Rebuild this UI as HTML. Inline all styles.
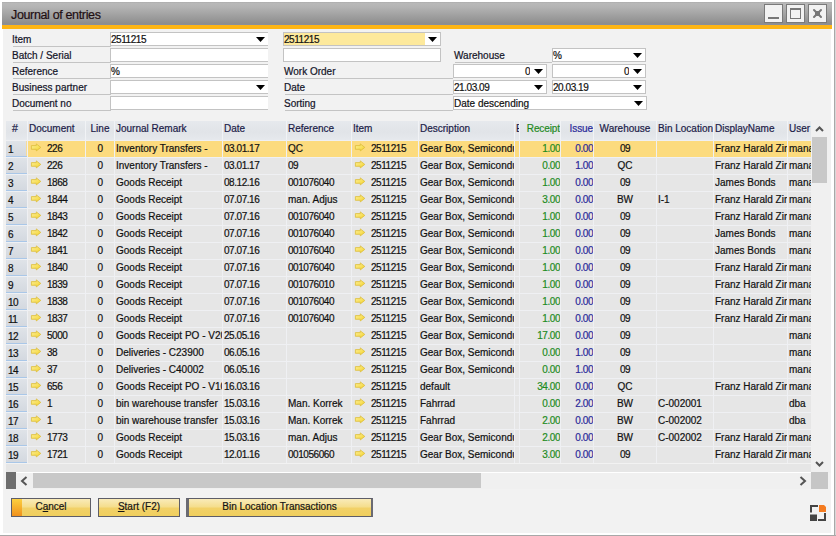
<!DOCTYPE html><html><head><meta charset="utf-8"><style>
html,body{margin:0;padding:0;width:836px;height:536px;overflow:hidden;background:#fff;font-family:"Liberation Sans", sans-serif;}
div{box-sizing:border-box;-webkit-text-stroke:0.2px currentColor;}
</style></head><body>
<svg width="0" height="0" style="position:absolute"><defs><linearGradient id="ag" x1="0" y1="0" x2="1" y2="1"><stop offset="0" stop-color="#fcef9a"/><stop offset="0.6" stop-color="#f8df58"/><stop offset="1" stop-color="#f2cf2c"/></linearGradient></defs></svg>
<div style="position:absolute;left:834px;top:0px;width:1px;height:536px;background:#a8a8a8;"></div>
<div style="position:absolute;left:835px;top:0px;width:1px;height:536px;background:#d8d8d8;"></div>
<div style="position:absolute;left:0px;top:535px;width:836px;height:1px;background:#a8a8a8;"></div>
<div style="position:absolute;left:2px;top:2px;width:830px;height:23px;background:linear-gradient(#a8a8a8 0,#b9b9b9 1px,#b4b4b4 5px,#8a8a8a 100%);"></div>
<div style="position:absolute;left:2px;top:24px;width:830px;height:1px;background:#8a8f9a;"></div>
<div style="position:absolute;left:2px;top:25px;width:830px;height:4px;background:#fdb515;"></div>
<div style="position:absolute;left:11px;top:8px;font-size:12.5px;line-height:14px;color:#1e0e12;white-space:nowrap;letter-spacing:-0.35px;">Journal of entries</div>
<div style="position:absolute;left:764px;top:4px;width:19px;height:19px;background:#f2f2f2;border:1px solid #7a7a7a;"></div>
<div style="position:absolute;left:786px;top:4px;width:19px;height:19px;background:#f2f2f2;border:1px solid #7a7a7a;"></div>
<div style="position:absolute;left:808px;top:4px;width:19px;height:19px;background:#f2f2f2;border:1px solid #7a7a7a;"></div>
<div style="position:absolute;left:768px;top:17px;width:11px;height:2px;background:#777;"></div>
<div style="position:absolute;left:790px;top:8px;width:11px;height:11px;background:transparent;border:1px solid #777;border-top-width:2px;"></div>
<svg width="19" height="19" style="position:absolute;left:808px;top:4px"><path d="M6,6 L13,13 M13,6 L6,13" stroke="#777" stroke-width="2" stroke-linecap="round"/><rect x="7" y="7" width="5" height="5" fill="#777"/></svg>
<div style="position:absolute;left:3px;top:29px;width:828px;height:504px;background:#f2f2f2;"></div>
<div style="position:absolute;left:12px;top:33px;font-size:10px;line-height:14px;color:#141428;white-space:nowrap;letter-spacing:0px;">Item</div>
<div style="position:absolute;left:13px;top:46px;width:98px;height:1px;background:#c4c4c4;"></div>
<div style="position:absolute;left:12px;top:49px;font-size:10px;line-height:14px;color:#141428;white-space:nowrap;letter-spacing:0px;">Batch / Serial</div>
<div style="position:absolute;left:13px;top:62px;width:98px;height:1px;background:#c4c4c4;"></div>
<div style="position:absolute;left:12px;top:65px;font-size:10px;line-height:14px;color:#141428;white-space:nowrap;letter-spacing:0px;">Reference</div>
<div style="position:absolute;left:13px;top:78px;width:98px;height:1px;background:#c4c4c4;"></div>
<div style="position:absolute;left:12px;top:81px;font-size:10px;line-height:14px;color:#141428;white-space:nowrap;letter-spacing:0px;">Business partner</div>
<div style="position:absolute;left:13px;top:94px;width:98px;height:1px;background:#c4c4c4;"></div>
<div style="position:absolute;left:12px;top:97px;font-size:10px;line-height:14px;color:#141428;white-space:nowrap;letter-spacing:0px;">Document no</div>
<div style="position:absolute;left:13px;top:110px;width:98px;height:1px;background:#c4c4c4;"></div>
<div style="position:absolute;left:110px;top:32px;width:158px;height:14px;background:#fff;border:1px solid #c3c3c3;border-right:none;"></div>
<div style="position:absolute;left:111px;top:33px;font-size:10px;line-height:14px;color:#111;white-space:nowrap;letter-spacing:-0.45px;">2511215</div>
<svg width="9" height="5" viewBox="0 0 9 5" style="position:absolute;left:256px;top:37px"><path d="M0,0 L9,0 L4.5,5 Z" fill="#000"/></svg>
<div style="position:absolute;left:110px;top:48px;width:158px;height:14px;background:#fff;border:1px solid #c3c3c3;border-right:none;"></div>
<div style="position:absolute;left:110px;top:64px;width:158px;height:14px;background:#fff;border:1px solid #c3c3c3;border-right:none;"></div>
<div style="position:absolute;left:111px;top:65px;font-size:10px;line-height:14px;color:#111;white-space:nowrap;letter-spacing:-0.45px;">%</div>
<div style="position:absolute;left:110px;top:80px;width:158px;height:14px;background:#fff;border:1px solid #c3c3c3;border-right:none;"></div>
<svg width="9" height="5" viewBox="0 0 9 5" style="position:absolute;left:256px;top:85px"><path d="M0,0 L9,0 L4.5,5 Z" fill="#000"/></svg>
<div style="position:absolute;left:110px;top:96px;width:158px;height:14px;background:#fff;border:1px solid #c3c3c3;border-right:none;"></div>
<div style="position:absolute;left:283px;top:32px;width:158px;height:14px;background:linear-gradient(90deg,#fde99c 0,#fde99c 141px,#fff 141px);border:1px solid #c3c3c3;"></div>
<div style="position:absolute;left:284px;top:33px;font-size:10px;line-height:14px;color:#111;white-space:nowrap;letter-spacing:-0.45px;">2511215</div>
<svg width="9" height="5" viewBox="0 0 9 5" style="position:absolute;left:428px;top:37px"><path d="M0,0 L9,0 L4.5,5 Z" fill="#000"/></svg>
<div style="position:absolute;left:283px;top:48px;width:158px;height:14px;background:#fff;border:1px solid #c3c3c3;"></div>
<div style="position:absolute;left:284px;top:65px;font-size:10px;line-height:14px;color:#141428;white-space:nowrap;letter-spacing:0px;">Work Order</div>
<div style="position:absolute;left:285px;top:78px;width:168px;height:1px;background:#c4c4c4;"></div>
<div style="position:absolute;left:284px;top:81px;font-size:10px;line-height:14px;color:#141428;white-space:nowrap;letter-spacing:0px;">Date</div>
<div style="position:absolute;left:285px;top:94px;width:168px;height:1px;background:#c4c4c4;"></div>
<div style="position:absolute;left:284px;top:97px;font-size:10px;line-height:14px;color:#141428;white-space:nowrap;letter-spacing:0px;">Sorting</div>
<div style="position:absolute;left:285px;top:110px;width:168px;height:1px;background:#c4c4c4;"></div>
<div style="position:absolute;left:454px;top:49px;font-size:10px;line-height:14px;color:#141428;white-space:nowrap;letter-spacing:0px;">Warehouse</div>
<div style="position:absolute;left:455px;top:62px;width:97px;height:1px;background:#c4c4c4;"></div>
<div style="position:absolute;left:453px;top:64px;width:94px;height:14px;background:#fff;border:1px solid #c3c3c3;"></div>
<div style="position:absolute;left:453px;top:65px;font-size:10px;line-height:14px;color:#111;white-space:nowrap;letter-spacing:-0.45px;width:77px;overflow:hidden;text-align:right;">0</div>
<svg width="9" height="5" viewBox="0 0 9 5" style="position:absolute;left:534px;top:69px"><path d="M0,0 L9,0 L4.5,5 Z" fill="#000"/></svg>
<div style="position:absolute;left:453px;top:80px;width:94px;height:14px;background:#fff;border:1px solid #c3c3c3;"></div>
<div style="position:absolute;left:454px;top:81px;font-size:10px;line-height:14px;color:#111;white-space:nowrap;letter-spacing:-0.45px;">21.03.09</div>
<svg width="9" height="5" viewBox="0 0 9 5" style="position:absolute;left:534px;top:85px"><path d="M0,0 L9,0 L4.5,5 Z" fill="#000"/></svg>
<div style="position:absolute;left:453px;top:96px;width:194px;height:14px;background:#fff;border:1px solid #c3c3c3;"></div>
<div style="position:absolute;left:454px;top:97px;font-size:10px;line-height:14px;color:#111;white-space:nowrap;letter-spacing:0px;">Date descending</div>
<svg width="9" height="5" viewBox="0 0 9 5" style="position:absolute;left:634px;top:101px"><path d="M0,0 L9,0 L4.5,5 Z" fill="#000"/></svg>
<div style="position:absolute;left:552px;top:48px;width:94px;height:14px;background:#fff;border:1px solid #c3c3c3;"></div>
<div style="position:absolute;left:553px;top:49px;font-size:10px;line-height:14px;color:#111;white-space:nowrap;letter-spacing:-0.45px;">%</div>
<svg width="9" height="5" viewBox="0 0 9 5" style="position:absolute;left:633px;top:53px"><path d="M0,0 L9,0 L4.5,5 Z" fill="#000"/></svg>
<div style="position:absolute;left:552px;top:64px;width:94px;height:14px;background:#fff;border:1px solid #c3c3c3;"></div>
<div style="position:absolute;left:552px;top:65px;font-size:10px;line-height:14px;color:#111;white-space:nowrap;letter-spacing:-0.45px;width:77px;overflow:hidden;text-align:right;">0</div>
<svg width="9" height="5" viewBox="0 0 9 5" style="position:absolute;left:633px;top:69px"><path d="M0,0 L9,0 L4.5,5 Z" fill="#000"/></svg>
<div style="position:absolute;left:552px;top:80px;width:94px;height:14px;background:#fff;border:1px solid #c3c3c3;"></div>
<div style="position:absolute;left:553px;top:81px;font-size:10px;line-height:14px;color:#111;white-space:nowrap;letter-spacing:-0.45px;">20.03.19</div>
<svg width="9" height="5" viewBox="0 0 9 5" style="position:absolute;left:633px;top:85px"><path d="M0,0 L9,0 L4.5,5 Z" fill="#000"/></svg>
<div style="position:absolute;left:6px;top:121px;width:805px;height:19px;background:linear-gradient(#e6e9ed,#e1e4e8 60%,#e6e9ed);"></div>
<div style="position:absolute;left:6px;top:140px;width:805px;height:323px;background:#eff0f3;"></div>
<div style="position:absolute;left:12px;top:121px;font-size:10.5px;line-height:14px;color:#1c1c48;white-space:nowrap;letter-spacing:0.3px;">#</div>
<div style="position:absolute;left:29px;top:122px;font-size:10px;line-height:14px;color:#1c1c48;white-space:nowrap;letter-spacing:0px;width:56px;overflow:hidden;text-align:left;">Document</div>
<div style="position:absolute;left:86px;top:122px;font-size:10px;line-height:14px;color:#1c1c48;white-space:nowrap;letter-spacing:0px;width:28px;overflow:hidden;text-align:center;">Line</div>
<div style="position:absolute;left:116px;top:122px;font-size:10px;line-height:14px;color:#1c1c48;white-space:nowrap;letter-spacing:0px;width:106px;overflow:hidden;text-align:left;">Journal Remark</div>
<div style="position:absolute;left:224px;top:122px;font-size:10px;line-height:14px;color:#1c1c48;white-space:nowrap;letter-spacing:0px;width:62px;overflow:hidden;text-align:left;">Date</div>
<div style="position:absolute;left:288px;top:122px;font-size:10px;line-height:14px;color:#1c1c48;white-space:nowrap;letter-spacing:0px;width:63px;overflow:hidden;text-align:left;">Reference</div>
<div style="position:absolute;left:353px;top:122px;font-size:10px;line-height:14px;color:#1c1c48;white-space:nowrap;letter-spacing:0px;width:65px;overflow:hidden;text-align:left;">Item</div>
<div style="position:absolute;left:420px;top:122px;font-size:10px;line-height:14px;color:#1c1c48;white-space:nowrap;letter-spacing:0px;width:94px;overflow:hidden;text-align:left;">Description</div>
<div style="position:absolute;left:516px;top:122px;font-size:10px;line-height:14px;color:#1c1c48;white-space:nowrap;letter-spacing:0px;width:3px;overflow:hidden;text-align:left;">E</div>
<div style="position:absolute;left:500px;top:122px;width:60px;text-align:right;font-size:10px;line-height:14px;color:#1f8a1f;white-space:nowrap;letter-spacing:-0.1px">Receipt</div>
<div style="position:absolute;left:541px;top:122px;width:52px;text-align:right;font-size:10px;line-height:14px;color:#2a2a9a;white-space:nowrap;letter-spacing:-0.1px">Issue</div>
<div style="position:absolute;left:594px;top:122px;font-size:10px;line-height:14px;color:#1c1c48;white-space:nowrap;letter-spacing:0px;width:62px;overflow:hidden;text-align:center;">Warehouse</div>
<div style="position:absolute;left:658px;top:122px;font-size:10px;line-height:14px;color:#1c1c48;white-space:nowrap;letter-spacing:0px;width:55px;overflow:hidden;text-align:left;">Bin Location</div>
<div style="position:absolute;left:715px;top:122px;font-size:10px;line-height:14px;color:#1c1c48;white-space:nowrap;letter-spacing:0px;width:72px;overflow:hidden;text-align:left;">DisplayName</div>
<div style="position:absolute;left:789px;top:122px;font-size:10px;line-height:14px;color:#1c1c48;white-space:nowrap;letter-spacing:0px;width:22px;overflow:hidden;text-align:left;">User</div>
<div style="position:absolute;left:27px;top:121px;width:1px;height:19px;background:#f1f3f6;"></div>
<div style="position:absolute;left:85px;top:121px;width:1px;height:19px;background:#f1f3f6;"></div>
<div style="position:absolute;left:114px;top:121px;width:1px;height:19px;background:#f1f3f6;"></div>
<div style="position:absolute;left:222px;top:121px;width:1px;height:19px;background:#f1f3f6;"></div>
<div style="position:absolute;left:286px;top:121px;width:1px;height:19px;background:#f1f3f6;"></div>
<div style="position:absolute;left:351px;top:121px;width:1px;height:19px;background:#f1f3f6;"></div>
<div style="position:absolute;left:418px;top:121px;width:1px;height:19px;background:#f1f3f6;"></div>
<div style="position:absolute;left:514px;top:121px;width:1px;height:19px;background:#f1f3f6;"></div>
<div style="position:absolute;left:519px;top:121px;width:1px;height:19px;background:#f1f3f6;"></div>
<div style="position:absolute;left:560px;top:121px;width:1px;height:19px;background:#f1f3f6;"></div>
<div style="position:absolute;left:593px;top:121px;width:1px;height:19px;background:#f1f3f6;"></div>
<div style="position:absolute;left:656px;top:121px;width:1px;height:19px;background:#f1f3f6;"></div>
<div style="position:absolute;left:713px;top:121px;width:1px;height:19px;background:#f1f3f6;"></div>
<div style="position:absolute;left:787px;top:121px;width:1px;height:19px;background:#f1f3f6;"></div>
<div style="position:absolute;left:6px;top:141px;width:21px;height:16px;background:linear-gradient(#dfe3e8,#d3d8df);"></div>
<div style="position:absolute;left:6px;top:156px;width:21px;height:1px;background:#a9c7e8;"></div>
<div style="position:absolute;left:8px;top:143px;font-size:10px;line-height:14px;color:#111;white-space:nowrap;letter-spacing:-0.45px;">1</div>
<div style="position:absolute;left:26px;top:141px;width:1px;height:15px;background:#f5dc9a;"></div>
<div style="position:absolute;left:28px;top:141px;width:57px;height:16px;background:#fcdb7e;"></div>
<div style="position:absolute;left:86px;top:141px;width:28px;height:16px;background:#fcdb7e;"></div>
<div style="position:absolute;left:115px;top:141px;width:107px;height:16px;background:#fcdb7e;"></div>
<div style="position:absolute;left:223px;top:141px;width:63px;height:16px;background:#fcdb7e;"></div>
<div style="position:absolute;left:287px;top:141px;width:64px;height:16px;background:#fcdb7e;"></div>
<div style="position:absolute;left:352px;top:141px;width:66px;height:16px;background:#fcdb7e;"></div>
<div style="position:absolute;left:419px;top:141px;width:95px;height:16px;background:#fcdb7e;"></div>
<div style="position:absolute;left:515px;top:141px;width:4px;height:16px;background:#fcdb7e;"></div>
<div style="position:absolute;left:520px;top:141px;width:40px;height:16px;background:#fcdb7e;"></div>
<div style="position:absolute;left:561px;top:141px;width:32px;height:16px;background:#fcdb7e;"></div>
<div style="position:absolute;left:594px;top:141px;width:62px;height:16px;background:#fcdb7e;"></div>
<div style="position:absolute;left:657px;top:141px;width:56px;height:16px;background:#fcdb7e;"></div>
<div style="position:absolute;left:714px;top:141px;width:73px;height:16px;background:#fcdb7e;"></div>
<div style="position:absolute;left:788px;top:141px;width:23px;height:16px;background:#fcdb7e;"></div>
<svg width="12" height="10" viewBox="0 0 12 10" style="position:absolute;left:30px;top:143px"><path d="M1.4,2.6 L6.3,2.6 L6.3,0.9 L10.8,4.4 L6.3,7.9 L6.3,6.3 L1.4,6.3 Z" fill="url(#ag)" stroke="#dcbd38" stroke-width="0.8" stroke-linejoin="round"/></svg>
<div style="position:absolute;left:47px;top:142px;font-size:10px;line-height:14px;color:#111;white-space:nowrap;letter-spacing:-0.45px;">226</div>
<div style="position:absolute;left:86px;top:142px;font-size:10px;line-height:14px;color:#111;white-space:nowrap;letter-spacing:-0.45px;width:28px;overflow:hidden;text-align:center;">0</div>
<div style="position:absolute;left:116px;top:142px;font-size:10px;line-height:14px;color:#111;white-space:nowrap;letter-spacing:0px;width:106px;overflow:hidden;text-align:left;">Inventory Transfers -</div>
<div style="position:absolute;left:224px;top:142px;font-size:10px;line-height:14px;color:#111;white-space:nowrap;letter-spacing:-0.45px;width:62px;overflow:hidden;text-align:left;">03.01.17</div>
<div style="position:absolute;left:288px;top:142px;font-size:10px;line-height:14px;color:#111;white-space:nowrap;letter-spacing:0px;width:63px;overflow:hidden;text-align:left;">QC</div>
<svg width="12" height="10" viewBox="0 0 12 10" style="position:absolute;left:354px;top:143px"><path d="M1.4,2.6 L6.3,2.6 L6.3,0.9 L10.8,4.4 L6.3,7.9 L6.3,6.3 L1.4,6.3 Z" fill="url(#ag)" stroke="#dcbd38" stroke-width="0.8" stroke-linejoin="round"/></svg>
<div style="position:absolute;left:371px;top:142px;font-size:10px;line-height:14px;color:#111;white-space:nowrap;letter-spacing:-0.45px;width:47px;overflow:hidden;text-align:left;">2511215</div>
<div style="position:absolute;left:420px;top:142px;font-size:10px;line-height:14px;color:#111;white-space:nowrap;letter-spacing:0px;width:94px;overflow:hidden;text-align:left;">Gear Box, Semiconductor</div>
<div style="position:absolute;left:520px;top:142px;font-size:10px;line-height:14px;color:#1e8c1e;white-space:nowrap;letter-spacing:-0.45px;width:40px;overflow:hidden;text-align:right;">1.00</div>
<div style="position:absolute;left:561px;top:142px;font-size:10px;line-height:14px;color:#2a2a9a;white-space:nowrap;letter-spacing:-0.45px;width:32px;overflow:hidden;text-align:right;">0.00</div>
<div style="position:absolute;left:594px;top:142px;font-size:10px;line-height:14px;color:#111;white-space:nowrap;letter-spacing:-0.45px;width:62px;overflow:hidden;text-align:center;">09</div>
<div style="position:absolute;left:658px;top:142px;font-size:10px;line-height:14px;color:#111;white-space:nowrap;letter-spacing:0px;width:55px;overflow:hidden;text-align:left;"></div>
<div style="position:absolute;left:715px;top:142px;font-size:10px;line-height:14px;color:#111;white-space:nowrap;letter-spacing:0px;width:72px;overflow:hidden;text-align:left;">Franz Harald Zimmermann</div>
<div style="position:absolute;left:789px;top:142px;font-size:10px;line-height:14px;color:#111;white-space:nowrap;letter-spacing:0px;width:23px;overflow:hidden;text-align:left;">manager</div>
<div style="position:absolute;left:6px;top:158px;width:21px;height:16px;background:linear-gradient(#dfe3e8,#d3d8df);"></div>
<div style="position:absolute;left:6px;top:173px;width:21px;height:1px;background:#a9c7e8;"></div>
<div style="position:absolute;left:8px;top:160px;font-size:10px;line-height:14px;color:#111;white-space:nowrap;letter-spacing:-0.45px;">2</div>
<div style="position:absolute;left:28px;top:158px;width:57px;height:16px;background:#e6e6e6;"></div>
<div style="position:absolute;left:86px;top:158px;width:28px;height:16px;background:#e6e6e6;"></div>
<div style="position:absolute;left:115px;top:158px;width:107px;height:16px;background:#e6e6e6;"></div>
<div style="position:absolute;left:223px;top:158px;width:63px;height:16px;background:#e6e6e6;"></div>
<div style="position:absolute;left:287px;top:158px;width:64px;height:16px;background:#e6e6e6;"></div>
<div style="position:absolute;left:352px;top:158px;width:66px;height:16px;background:#e6e6e6;"></div>
<div style="position:absolute;left:419px;top:158px;width:95px;height:16px;background:#e6e6e6;"></div>
<div style="position:absolute;left:515px;top:158px;width:4px;height:16px;background:#e6e6e6;"></div>
<div style="position:absolute;left:520px;top:158px;width:40px;height:16px;background:#e6e6e6;"></div>
<div style="position:absolute;left:561px;top:158px;width:32px;height:16px;background:#e6e6e6;"></div>
<div style="position:absolute;left:594px;top:158px;width:62px;height:16px;background:#e6e6e6;"></div>
<div style="position:absolute;left:657px;top:158px;width:56px;height:16px;background:#e6e6e6;"></div>
<div style="position:absolute;left:714px;top:158px;width:73px;height:16px;background:#e6e6e6;"></div>
<div style="position:absolute;left:788px;top:158px;width:23px;height:16px;background:#e6e6e6;"></div>
<svg width="12" height="10" viewBox="0 0 12 10" style="position:absolute;left:30px;top:160px"><path d="M1.4,2.6 L6.3,2.6 L6.3,0.9 L10.8,4.4 L6.3,7.9 L6.3,6.3 L1.4,6.3 Z" fill="url(#ag)" stroke="#dcbd38" stroke-width="0.8" stroke-linejoin="round"/></svg>
<div style="position:absolute;left:47px;top:159px;font-size:10px;line-height:14px;color:#111;white-space:nowrap;letter-spacing:-0.45px;">226</div>
<div style="position:absolute;left:86px;top:159px;font-size:10px;line-height:14px;color:#111;white-space:nowrap;letter-spacing:-0.45px;width:28px;overflow:hidden;text-align:center;">0</div>
<div style="position:absolute;left:116px;top:159px;font-size:10px;line-height:14px;color:#111;white-space:nowrap;letter-spacing:0px;width:106px;overflow:hidden;text-align:left;">Inventory Transfers -</div>
<div style="position:absolute;left:224px;top:159px;font-size:10px;line-height:14px;color:#111;white-space:nowrap;letter-spacing:-0.45px;width:62px;overflow:hidden;text-align:left;">03.01.17</div>
<div style="position:absolute;left:288px;top:159px;font-size:10px;line-height:14px;color:#111;white-space:nowrap;letter-spacing:-0.45px;width:63px;overflow:hidden;text-align:left;">09</div>
<svg width="12" height="10" viewBox="0 0 12 10" style="position:absolute;left:354px;top:160px"><path d="M1.4,2.6 L6.3,2.6 L6.3,0.9 L10.8,4.4 L6.3,7.9 L6.3,6.3 L1.4,6.3 Z" fill="url(#ag)" stroke="#dcbd38" stroke-width="0.8" stroke-linejoin="round"/></svg>
<div style="position:absolute;left:371px;top:159px;font-size:10px;line-height:14px;color:#111;white-space:nowrap;letter-spacing:-0.45px;width:47px;overflow:hidden;text-align:left;">2511215</div>
<div style="position:absolute;left:420px;top:159px;font-size:10px;line-height:14px;color:#111;white-space:nowrap;letter-spacing:0px;width:94px;overflow:hidden;text-align:left;">Gear Box, Semiconductor</div>
<div style="position:absolute;left:520px;top:159px;font-size:10px;line-height:14px;color:#1e8c1e;white-space:nowrap;letter-spacing:-0.45px;width:40px;overflow:hidden;text-align:right;">0.00</div>
<div style="position:absolute;left:561px;top:159px;font-size:10px;line-height:14px;color:#2a2a9a;white-space:nowrap;letter-spacing:-0.45px;width:32px;overflow:hidden;text-align:right;">1.00</div>
<div style="position:absolute;left:594px;top:159px;font-size:10px;line-height:14px;color:#111;white-space:nowrap;letter-spacing:0px;width:62px;overflow:hidden;text-align:center;">QC</div>
<div style="position:absolute;left:658px;top:159px;font-size:10px;line-height:14px;color:#111;white-space:nowrap;letter-spacing:0px;width:55px;overflow:hidden;text-align:left;"></div>
<div style="position:absolute;left:715px;top:159px;font-size:10px;line-height:14px;color:#111;white-space:nowrap;letter-spacing:0px;width:72px;overflow:hidden;text-align:left;">Franz Harald Zimmermann</div>
<div style="position:absolute;left:789px;top:159px;font-size:10px;line-height:14px;color:#111;white-space:nowrap;letter-spacing:0px;width:23px;overflow:hidden;text-align:left;">manager</div>
<div style="position:absolute;left:6px;top:175px;width:21px;height:16px;background:linear-gradient(#dfe3e8,#d3d8df);"></div>
<div style="position:absolute;left:6px;top:190px;width:21px;height:1px;background:#a9c7e8;"></div>
<div style="position:absolute;left:8px;top:177px;font-size:10px;line-height:14px;color:#111;white-space:nowrap;letter-spacing:-0.45px;">3</div>
<div style="position:absolute;left:28px;top:175px;width:57px;height:16px;background:#e6e6e6;"></div>
<div style="position:absolute;left:86px;top:175px;width:28px;height:16px;background:#e6e6e6;"></div>
<div style="position:absolute;left:115px;top:175px;width:107px;height:16px;background:#e6e6e6;"></div>
<div style="position:absolute;left:223px;top:175px;width:63px;height:16px;background:#e6e6e6;"></div>
<div style="position:absolute;left:287px;top:175px;width:64px;height:16px;background:#e6e6e6;"></div>
<div style="position:absolute;left:352px;top:175px;width:66px;height:16px;background:#e6e6e6;"></div>
<div style="position:absolute;left:419px;top:175px;width:95px;height:16px;background:#e6e6e6;"></div>
<div style="position:absolute;left:515px;top:175px;width:4px;height:16px;background:#e6e6e6;"></div>
<div style="position:absolute;left:520px;top:175px;width:40px;height:16px;background:#e6e6e6;"></div>
<div style="position:absolute;left:561px;top:175px;width:32px;height:16px;background:#e6e6e6;"></div>
<div style="position:absolute;left:594px;top:175px;width:62px;height:16px;background:#e6e6e6;"></div>
<div style="position:absolute;left:657px;top:175px;width:56px;height:16px;background:#e6e6e6;"></div>
<div style="position:absolute;left:714px;top:175px;width:73px;height:16px;background:#e6e6e6;"></div>
<div style="position:absolute;left:788px;top:175px;width:23px;height:16px;background:#e6e6e6;"></div>
<svg width="12" height="10" viewBox="0 0 12 10" style="position:absolute;left:30px;top:177px"><path d="M1.4,2.6 L6.3,2.6 L6.3,0.9 L10.8,4.4 L6.3,7.9 L6.3,6.3 L1.4,6.3 Z" fill="url(#ag)" stroke="#dcbd38" stroke-width="0.8" stroke-linejoin="round"/></svg>
<div style="position:absolute;left:47px;top:176px;font-size:10px;line-height:14px;color:#111;white-space:nowrap;letter-spacing:-0.45px;">1868</div>
<div style="position:absolute;left:86px;top:176px;font-size:10px;line-height:14px;color:#111;white-space:nowrap;letter-spacing:-0.45px;width:28px;overflow:hidden;text-align:center;">0</div>
<div style="position:absolute;left:116px;top:176px;font-size:10px;line-height:14px;color:#111;white-space:nowrap;letter-spacing:0px;width:106px;overflow:hidden;text-align:left;">Goods Receipt</div>
<div style="position:absolute;left:224px;top:176px;font-size:10px;line-height:14px;color:#111;white-space:nowrap;letter-spacing:-0.45px;width:62px;overflow:hidden;text-align:left;">08.12.16</div>
<div style="position:absolute;left:288px;top:176px;font-size:10px;line-height:14px;color:#111;white-space:nowrap;letter-spacing:-0.45px;width:63px;overflow:hidden;text-align:left;">001076040</div>
<svg width="12" height="10" viewBox="0 0 12 10" style="position:absolute;left:354px;top:177px"><path d="M1.4,2.6 L6.3,2.6 L6.3,0.9 L10.8,4.4 L6.3,7.9 L6.3,6.3 L1.4,6.3 Z" fill="url(#ag)" stroke="#dcbd38" stroke-width="0.8" stroke-linejoin="round"/></svg>
<div style="position:absolute;left:371px;top:176px;font-size:10px;line-height:14px;color:#111;white-space:nowrap;letter-spacing:-0.45px;width:47px;overflow:hidden;text-align:left;">2511215</div>
<div style="position:absolute;left:420px;top:176px;font-size:10px;line-height:14px;color:#111;white-space:nowrap;letter-spacing:0px;width:94px;overflow:hidden;text-align:left;">Gear Box, Semiconductor</div>
<div style="position:absolute;left:520px;top:176px;font-size:10px;line-height:14px;color:#1e8c1e;white-space:nowrap;letter-spacing:-0.45px;width:40px;overflow:hidden;text-align:right;">1.00</div>
<div style="position:absolute;left:561px;top:176px;font-size:10px;line-height:14px;color:#2a2a9a;white-space:nowrap;letter-spacing:-0.45px;width:32px;overflow:hidden;text-align:right;">0.00</div>
<div style="position:absolute;left:594px;top:176px;font-size:10px;line-height:14px;color:#111;white-space:nowrap;letter-spacing:-0.45px;width:62px;overflow:hidden;text-align:center;">09</div>
<div style="position:absolute;left:658px;top:176px;font-size:10px;line-height:14px;color:#111;white-space:nowrap;letter-spacing:0px;width:55px;overflow:hidden;text-align:left;"></div>
<div style="position:absolute;left:715px;top:176px;font-size:10px;line-height:14px;color:#111;white-space:nowrap;letter-spacing:0px;width:72px;overflow:hidden;text-align:left;">James Bonds</div>
<div style="position:absolute;left:789px;top:176px;font-size:10px;line-height:14px;color:#111;white-space:nowrap;letter-spacing:0px;width:23px;overflow:hidden;text-align:left;">manager</div>
<div style="position:absolute;left:6px;top:192px;width:21px;height:16px;background:linear-gradient(#dfe3e8,#d3d8df);"></div>
<div style="position:absolute;left:6px;top:207px;width:21px;height:1px;background:#a9c7e8;"></div>
<div style="position:absolute;left:8px;top:194px;font-size:10px;line-height:14px;color:#111;white-space:nowrap;letter-spacing:-0.45px;">4</div>
<div style="position:absolute;left:28px;top:192px;width:57px;height:16px;background:#e6e6e6;"></div>
<div style="position:absolute;left:86px;top:192px;width:28px;height:16px;background:#e6e6e6;"></div>
<div style="position:absolute;left:115px;top:192px;width:107px;height:16px;background:#e6e6e6;"></div>
<div style="position:absolute;left:223px;top:192px;width:63px;height:16px;background:#e6e6e6;"></div>
<div style="position:absolute;left:287px;top:192px;width:64px;height:16px;background:#e6e6e6;"></div>
<div style="position:absolute;left:352px;top:192px;width:66px;height:16px;background:#e6e6e6;"></div>
<div style="position:absolute;left:419px;top:192px;width:95px;height:16px;background:#e6e6e6;"></div>
<div style="position:absolute;left:515px;top:192px;width:4px;height:16px;background:#e6e6e6;"></div>
<div style="position:absolute;left:520px;top:192px;width:40px;height:16px;background:#e6e6e6;"></div>
<div style="position:absolute;left:561px;top:192px;width:32px;height:16px;background:#e6e6e6;"></div>
<div style="position:absolute;left:594px;top:192px;width:62px;height:16px;background:#e6e6e6;"></div>
<div style="position:absolute;left:657px;top:192px;width:56px;height:16px;background:#e6e6e6;"></div>
<div style="position:absolute;left:714px;top:192px;width:73px;height:16px;background:#e6e6e6;"></div>
<div style="position:absolute;left:788px;top:192px;width:23px;height:16px;background:#e6e6e6;"></div>
<svg width="12" height="10" viewBox="0 0 12 10" style="position:absolute;left:30px;top:194px"><path d="M1.4,2.6 L6.3,2.6 L6.3,0.9 L10.8,4.4 L6.3,7.9 L6.3,6.3 L1.4,6.3 Z" fill="url(#ag)" stroke="#dcbd38" stroke-width="0.8" stroke-linejoin="round"/></svg>
<div style="position:absolute;left:47px;top:193px;font-size:10px;line-height:14px;color:#111;white-space:nowrap;letter-spacing:-0.45px;">1844</div>
<div style="position:absolute;left:86px;top:193px;font-size:10px;line-height:14px;color:#111;white-space:nowrap;letter-spacing:-0.45px;width:28px;overflow:hidden;text-align:center;">0</div>
<div style="position:absolute;left:116px;top:193px;font-size:10px;line-height:14px;color:#111;white-space:nowrap;letter-spacing:0px;width:106px;overflow:hidden;text-align:left;">Goods Receipt</div>
<div style="position:absolute;left:224px;top:193px;font-size:10px;line-height:14px;color:#111;white-space:nowrap;letter-spacing:-0.45px;width:62px;overflow:hidden;text-align:left;">07.07.16</div>
<div style="position:absolute;left:288px;top:193px;font-size:10px;line-height:14px;color:#111;white-space:nowrap;letter-spacing:0px;width:63px;overflow:hidden;text-align:left;">man. Adjus</div>
<svg width="12" height="10" viewBox="0 0 12 10" style="position:absolute;left:354px;top:194px"><path d="M1.4,2.6 L6.3,2.6 L6.3,0.9 L10.8,4.4 L6.3,7.9 L6.3,6.3 L1.4,6.3 Z" fill="url(#ag)" stroke="#dcbd38" stroke-width="0.8" stroke-linejoin="round"/></svg>
<div style="position:absolute;left:371px;top:193px;font-size:10px;line-height:14px;color:#111;white-space:nowrap;letter-spacing:-0.45px;width:47px;overflow:hidden;text-align:left;">2511215</div>
<div style="position:absolute;left:420px;top:193px;font-size:10px;line-height:14px;color:#111;white-space:nowrap;letter-spacing:0px;width:94px;overflow:hidden;text-align:left;">Gear Box, Semiconductor</div>
<div style="position:absolute;left:520px;top:193px;font-size:10px;line-height:14px;color:#1e8c1e;white-space:nowrap;letter-spacing:-0.45px;width:40px;overflow:hidden;text-align:right;">3.00</div>
<div style="position:absolute;left:561px;top:193px;font-size:10px;line-height:14px;color:#2a2a9a;white-space:nowrap;letter-spacing:-0.45px;width:32px;overflow:hidden;text-align:right;">0.00</div>
<div style="position:absolute;left:594px;top:193px;font-size:10px;line-height:14px;color:#111;white-space:nowrap;letter-spacing:0px;width:62px;overflow:hidden;text-align:center;">BW</div>
<div style="position:absolute;left:658px;top:193px;font-size:10px;line-height:14px;color:#111;white-space:nowrap;letter-spacing:0px;width:55px;overflow:hidden;text-align:left;">I-1</div>
<div style="position:absolute;left:715px;top:193px;font-size:10px;line-height:14px;color:#111;white-space:nowrap;letter-spacing:0px;width:72px;overflow:hidden;text-align:left;">Franz Harald Zimmermann</div>
<div style="position:absolute;left:789px;top:193px;font-size:10px;line-height:14px;color:#111;white-space:nowrap;letter-spacing:0px;width:23px;overflow:hidden;text-align:left;">manager</div>
<div style="position:absolute;left:6px;top:209px;width:21px;height:16px;background:linear-gradient(#dfe3e8,#d3d8df);"></div>
<div style="position:absolute;left:6px;top:224px;width:21px;height:1px;background:#a9c7e8;"></div>
<div style="position:absolute;left:8px;top:211px;font-size:10px;line-height:14px;color:#111;white-space:nowrap;letter-spacing:-0.45px;">5</div>
<div style="position:absolute;left:28px;top:209px;width:57px;height:16px;background:#e6e6e6;"></div>
<div style="position:absolute;left:86px;top:209px;width:28px;height:16px;background:#e6e6e6;"></div>
<div style="position:absolute;left:115px;top:209px;width:107px;height:16px;background:#e6e6e6;"></div>
<div style="position:absolute;left:223px;top:209px;width:63px;height:16px;background:#e6e6e6;"></div>
<div style="position:absolute;left:287px;top:209px;width:64px;height:16px;background:#e6e6e6;"></div>
<div style="position:absolute;left:352px;top:209px;width:66px;height:16px;background:#e6e6e6;"></div>
<div style="position:absolute;left:419px;top:209px;width:95px;height:16px;background:#e6e6e6;"></div>
<div style="position:absolute;left:515px;top:209px;width:4px;height:16px;background:#e6e6e6;"></div>
<div style="position:absolute;left:520px;top:209px;width:40px;height:16px;background:#e6e6e6;"></div>
<div style="position:absolute;left:561px;top:209px;width:32px;height:16px;background:#e6e6e6;"></div>
<div style="position:absolute;left:594px;top:209px;width:62px;height:16px;background:#e6e6e6;"></div>
<div style="position:absolute;left:657px;top:209px;width:56px;height:16px;background:#e6e6e6;"></div>
<div style="position:absolute;left:714px;top:209px;width:73px;height:16px;background:#e6e6e6;"></div>
<div style="position:absolute;left:788px;top:209px;width:23px;height:16px;background:#e6e6e6;"></div>
<svg width="12" height="10" viewBox="0 0 12 10" style="position:absolute;left:30px;top:211px"><path d="M1.4,2.6 L6.3,2.6 L6.3,0.9 L10.8,4.4 L6.3,7.9 L6.3,6.3 L1.4,6.3 Z" fill="url(#ag)" stroke="#dcbd38" stroke-width="0.8" stroke-linejoin="round"/></svg>
<div style="position:absolute;left:47px;top:210px;font-size:10px;line-height:14px;color:#111;white-space:nowrap;letter-spacing:-0.45px;">1843</div>
<div style="position:absolute;left:86px;top:210px;font-size:10px;line-height:14px;color:#111;white-space:nowrap;letter-spacing:-0.45px;width:28px;overflow:hidden;text-align:center;">0</div>
<div style="position:absolute;left:116px;top:210px;font-size:10px;line-height:14px;color:#111;white-space:nowrap;letter-spacing:0px;width:106px;overflow:hidden;text-align:left;">Goods Receipt</div>
<div style="position:absolute;left:224px;top:210px;font-size:10px;line-height:14px;color:#111;white-space:nowrap;letter-spacing:-0.45px;width:62px;overflow:hidden;text-align:left;">07.07.16</div>
<div style="position:absolute;left:288px;top:210px;font-size:10px;line-height:14px;color:#111;white-space:nowrap;letter-spacing:-0.45px;width:63px;overflow:hidden;text-align:left;">001076040</div>
<svg width="12" height="10" viewBox="0 0 12 10" style="position:absolute;left:354px;top:211px"><path d="M1.4,2.6 L6.3,2.6 L6.3,0.9 L10.8,4.4 L6.3,7.9 L6.3,6.3 L1.4,6.3 Z" fill="url(#ag)" stroke="#dcbd38" stroke-width="0.8" stroke-linejoin="round"/></svg>
<div style="position:absolute;left:371px;top:210px;font-size:10px;line-height:14px;color:#111;white-space:nowrap;letter-spacing:-0.45px;width:47px;overflow:hidden;text-align:left;">2511215</div>
<div style="position:absolute;left:420px;top:210px;font-size:10px;line-height:14px;color:#111;white-space:nowrap;letter-spacing:0px;width:94px;overflow:hidden;text-align:left;">Gear Box, Semiconductor</div>
<div style="position:absolute;left:520px;top:210px;font-size:10px;line-height:14px;color:#1e8c1e;white-space:nowrap;letter-spacing:-0.45px;width:40px;overflow:hidden;text-align:right;">1.00</div>
<div style="position:absolute;left:561px;top:210px;font-size:10px;line-height:14px;color:#2a2a9a;white-space:nowrap;letter-spacing:-0.45px;width:32px;overflow:hidden;text-align:right;">0.00</div>
<div style="position:absolute;left:594px;top:210px;font-size:10px;line-height:14px;color:#111;white-space:nowrap;letter-spacing:-0.45px;width:62px;overflow:hidden;text-align:center;">09</div>
<div style="position:absolute;left:658px;top:210px;font-size:10px;line-height:14px;color:#111;white-space:nowrap;letter-spacing:0px;width:55px;overflow:hidden;text-align:left;"></div>
<div style="position:absolute;left:715px;top:210px;font-size:10px;line-height:14px;color:#111;white-space:nowrap;letter-spacing:0px;width:72px;overflow:hidden;text-align:left;">Franz Harald Zimmermann</div>
<div style="position:absolute;left:789px;top:210px;font-size:10px;line-height:14px;color:#111;white-space:nowrap;letter-spacing:0px;width:23px;overflow:hidden;text-align:left;">manager</div>
<div style="position:absolute;left:6px;top:226px;width:21px;height:16px;background:linear-gradient(#dfe3e8,#d3d8df);"></div>
<div style="position:absolute;left:6px;top:241px;width:21px;height:1px;background:#a9c7e8;"></div>
<div style="position:absolute;left:8px;top:228px;font-size:10px;line-height:14px;color:#111;white-space:nowrap;letter-spacing:-0.45px;">6</div>
<div style="position:absolute;left:28px;top:226px;width:57px;height:16px;background:#e6e6e6;"></div>
<div style="position:absolute;left:86px;top:226px;width:28px;height:16px;background:#e6e6e6;"></div>
<div style="position:absolute;left:115px;top:226px;width:107px;height:16px;background:#e6e6e6;"></div>
<div style="position:absolute;left:223px;top:226px;width:63px;height:16px;background:#e6e6e6;"></div>
<div style="position:absolute;left:287px;top:226px;width:64px;height:16px;background:#e6e6e6;"></div>
<div style="position:absolute;left:352px;top:226px;width:66px;height:16px;background:#e6e6e6;"></div>
<div style="position:absolute;left:419px;top:226px;width:95px;height:16px;background:#e6e6e6;"></div>
<div style="position:absolute;left:515px;top:226px;width:4px;height:16px;background:#e6e6e6;"></div>
<div style="position:absolute;left:520px;top:226px;width:40px;height:16px;background:#e6e6e6;"></div>
<div style="position:absolute;left:561px;top:226px;width:32px;height:16px;background:#e6e6e6;"></div>
<div style="position:absolute;left:594px;top:226px;width:62px;height:16px;background:#e6e6e6;"></div>
<div style="position:absolute;left:657px;top:226px;width:56px;height:16px;background:#e6e6e6;"></div>
<div style="position:absolute;left:714px;top:226px;width:73px;height:16px;background:#e6e6e6;"></div>
<div style="position:absolute;left:788px;top:226px;width:23px;height:16px;background:#e6e6e6;"></div>
<svg width="12" height="10" viewBox="0 0 12 10" style="position:absolute;left:30px;top:228px"><path d="M1.4,2.6 L6.3,2.6 L6.3,0.9 L10.8,4.4 L6.3,7.9 L6.3,6.3 L1.4,6.3 Z" fill="url(#ag)" stroke="#dcbd38" stroke-width="0.8" stroke-linejoin="round"/></svg>
<div style="position:absolute;left:47px;top:227px;font-size:10px;line-height:14px;color:#111;white-space:nowrap;letter-spacing:-0.45px;">1842</div>
<div style="position:absolute;left:86px;top:227px;font-size:10px;line-height:14px;color:#111;white-space:nowrap;letter-spacing:-0.45px;width:28px;overflow:hidden;text-align:center;">0</div>
<div style="position:absolute;left:116px;top:227px;font-size:10px;line-height:14px;color:#111;white-space:nowrap;letter-spacing:0px;width:106px;overflow:hidden;text-align:left;">Goods Receipt</div>
<div style="position:absolute;left:224px;top:227px;font-size:10px;line-height:14px;color:#111;white-space:nowrap;letter-spacing:-0.45px;width:62px;overflow:hidden;text-align:left;">07.07.16</div>
<div style="position:absolute;left:288px;top:227px;font-size:10px;line-height:14px;color:#111;white-space:nowrap;letter-spacing:-0.45px;width:63px;overflow:hidden;text-align:left;">001076040</div>
<svg width="12" height="10" viewBox="0 0 12 10" style="position:absolute;left:354px;top:228px"><path d="M1.4,2.6 L6.3,2.6 L6.3,0.9 L10.8,4.4 L6.3,7.9 L6.3,6.3 L1.4,6.3 Z" fill="url(#ag)" stroke="#dcbd38" stroke-width="0.8" stroke-linejoin="round"/></svg>
<div style="position:absolute;left:371px;top:227px;font-size:10px;line-height:14px;color:#111;white-space:nowrap;letter-spacing:-0.45px;width:47px;overflow:hidden;text-align:left;">2511215</div>
<div style="position:absolute;left:420px;top:227px;font-size:10px;line-height:14px;color:#111;white-space:nowrap;letter-spacing:0px;width:94px;overflow:hidden;text-align:left;">Gear Box, Semiconductor</div>
<div style="position:absolute;left:520px;top:227px;font-size:10px;line-height:14px;color:#1e8c1e;white-space:nowrap;letter-spacing:-0.45px;width:40px;overflow:hidden;text-align:right;">1.00</div>
<div style="position:absolute;left:561px;top:227px;font-size:10px;line-height:14px;color:#2a2a9a;white-space:nowrap;letter-spacing:-0.45px;width:32px;overflow:hidden;text-align:right;">0.00</div>
<div style="position:absolute;left:594px;top:227px;font-size:10px;line-height:14px;color:#111;white-space:nowrap;letter-spacing:-0.45px;width:62px;overflow:hidden;text-align:center;">09</div>
<div style="position:absolute;left:658px;top:227px;font-size:10px;line-height:14px;color:#111;white-space:nowrap;letter-spacing:0px;width:55px;overflow:hidden;text-align:left;"></div>
<div style="position:absolute;left:715px;top:227px;font-size:10px;line-height:14px;color:#111;white-space:nowrap;letter-spacing:0px;width:72px;overflow:hidden;text-align:left;">James Bonds</div>
<div style="position:absolute;left:789px;top:227px;font-size:10px;line-height:14px;color:#111;white-space:nowrap;letter-spacing:0px;width:23px;overflow:hidden;text-align:left;">manager</div>
<div style="position:absolute;left:6px;top:243px;width:21px;height:16px;background:linear-gradient(#dfe3e8,#d3d8df);"></div>
<div style="position:absolute;left:6px;top:258px;width:21px;height:1px;background:#a9c7e8;"></div>
<div style="position:absolute;left:8px;top:245px;font-size:10px;line-height:14px;color:#111;white-space:nowrap;letter-spacing:-0.45px;">7</div>
<div style="position:absolute;left:28px;top:243px;width:57px;height:16px;background:#e6e6e6;"></div>
<div style="position:absolute;left:86px;top:243px;width:28px;height:16px;background:#e6e6e6;"></div>
<div style="position:absolute;left:115px;top:243px;width:107px;height:16px;background:#e6e6e6;"></div>
<div style="position:absolute;left:223px;top:243px;width:63px;height:16px;background:#e6e6e6;"></div>
<div style="position:absolute;left:287px;top:243px;width:64px;height:16px;background:#e6e6e6;"></div>
<div style="position:absolute;left:352px;top:243px;width:66px;height:16px;background:#e6e6e6;"></div>
<div style="position:absolute;left:419px;top:243px;width:95px;height:16px;background:#e6e6e6;"></div>
<div style="position:absolute;left:515px;top:243px;width:4px;height:16px;background:#e6e6e6;"></div>
<div style="position:absolute;left:520px;top:243px;width:40px;height:16px;background:#e6e6e6;"></div>
<div style="position:absolute;left:561px;top:243px;width:32px;height:16px;background:#e6e6e6;"></div>
<div style="position:absolute;left:594px;top:243px;width:62px;height:16px;background:#e6e6e6;"></div>
<div style="position:absolute;left:657px;top:243px;width:56px;height:16px;background:#e6e6e6;"></div>
<div style="position:absolute;left:714px;top:243px;width:73px;height:16px;background:#e6e6e6;"></div>
<div style="position:absolute;left:788px;top:243px;width:23px;height:16px;background:#e6e6e6;"></div>
<svg width="12" height="10" viewBox="0 0 12 10" style="position:absolute;left:30px;top:245px"><path d="M1.4,2.6 L6.3,2.6 L6.3,0.9 L10.8,4.4 L6.3,7.9 L6.3,6.3 L1.4,6.3 Z" fill="url(#ag)" stroke="#dcbd38" stroke-width="0.8" stroke-linejoin="round"/></svg>
<div style="position:absolute;left:47px;top:244px;font-size:10px;line-height:14px;color:#111;white-space:nowrap;letter-spacing:-0.45px;">1841</div>
<div style="position:absolute;left:86px;top:244px;font-size:10px;line-height:14px;color:#111;white-space:nowrap;letter-spacing:-0.45px;width:28px;overflow:hidden;text-align:center;">0</div>
<div style="position:absolute;left:116px;top:244px;font-size:10px;line-height:14px;color:#111;white-space:nowrap;letter-spacing:0px;width:106px;overflow:hidden;text-align:left;">Goods Receipt</div>
<div style="position:absolute;left:224px;top:244px;font-size:10px;line-height:14px;color:#111;white-space:nowrap;letter-spacing:-0.45px;width:62px;overflow:hidden;text-align:left;">07.07.16</div>
<div style="position:absolute;left:288px;top:244px;font-size:10px;line-height:14px;color:#111;white-space:nowrap;letter-spacing:-0.45px;width:63px;overflow:hidden;text-align:left;">001076040</div>
<svg width="12" height="10" viewBox="0 0 12 10" style="position:absolute;left:354px;top:245px"><path d="M1.4,2.6 L6.3,2.6 L6.3,0.9 L10.8,4.4 L6.3,7.9 L6.3,6.3 L1.4,6.3 Z" fill="url(#ag)" stroke="#dcbd38" stroke-width="0.8" stroke-linejoin="round"/></svg>
<div style="position:absolute;left:371px;top:244px;font-size:10px;line-height:14px;color:#111;white-space:nowrap;letter-spacing:-0.45px;width:47px;overflow:hidden;text-align:left;">2511215</div>
<div style="position:absolute;left:420px;top:244px;font-size:10px;line-height:14px;color:#111;white-space:nowrap;letter-spacing:0px;width:94px;overflow:hidden;text-align:left;">Gear Box, Semiconductor</div>
<div style="position:absolute;left:520px;top:244px;font-size:10px;line-height:14px;color:#1e8c1e;white-space:nowrap;letter-spacing:-0.45px;width:40px;overflow:hidden;text-align:right;">1.00</div>
<div style="position:absolute;left:561px;top:244px;font-size:10px;line-height:14px;color:#2a2a9a;white-space:nowrap;letter-spacing:-0.45px;width:32px;overflow:hidden;text-align:right;">0.00</div>
<div style="position:absolute;left:594px;top:244px;font-size:10px;line-height:14px;color:#111;white-space:nowrap;letter-spacing:-0.45px;width:62px;overflow:hidden;text-align:center;">09</div>
<div style="position:absolute;left:658px;top:244px;font-size:10px;line-height:14px;color:#111;white-space:nowrap;letter-spacing:0px;width:55px;overflow:hidden;text-align:left;"></div>
<div style="position:absolute;left:715px;top:244px;font-size:10px;line-height:14px;color:#111;white-space:nowrap;letter-spacing:0px;width:72px;overflow:hidden;text-align:left;">James Bonds</div>
<div style="position:absolute;left:789px;top:244px;font-size:10px;line-height:14px;color:#111;white-space:nowrap;letter-spacing:0px;width:23px;overflow:hidden;text-align:left;">manager</div>
<div style="position:absolute;left:6px;top:260px;width:21px;height:16px;background:linear-gradient(#dfe3e8,#d3d8df);"></div>
<div style="position:absolute;left:6px;top:275px;width:21px;height:1px;background:#a9c7e8;"></div>
<div style="position:absolute;left:8px;top:262px;font-size:10px;line-height:14px;color:#111;white-space:nowrap;letter-spacing:-0.45px;">8</div>
<div style="position:absolute;left:28px;top:260px;width:57px;height:16px;background:#e6e6e6;"></div>
<div style="position:absolute;left:86px;top:260px;width:28px;height:16px;background:#e6e6e6;"></div>
<div style="position:absolute;left:115px;top:260px;width:107px;height:16px;background:#e6e6e6;"></div>
<div style="position:absolute;left:223px;top:260px;width:63px;height:16px;background:#e6e6e6;"></div>
<div style="position:absolute;left:287px;top:260px;width:64px;height:16px;background:#e6e6e6;"></div>
<div style="position:absolute;left:352px;top:260px;width:66px;height:16px;background:#e6e6e6;"></div>
<div style="position:absolute;left:419px;top:260px;width:95px;height:16px;background:#e6e6e6;"></div>
<div style="position:absolute;left:515px;top:260px;width:4px;height:16px;background:#e6e6e6;"></div>
<div style="position:absolute;left:520px;top:260px;width:40px;height:16px;background:#e6e6e6;"></div>
<div style="position:absolute;left:561px;top:260px;width:32px;height:16px;background:#e6e6e6;"></div>
<div style="position:absolute;left:594px;top:260px;width:62px;height:16px;background:#e6e6e6;"></div>
<div style="position:absolute;left:657px;top:260px;width:56px;height:16px;background:#e6e6e6;"></div>
<div style="position:absolute;left:714px;top:260px;width:73px;height:16px;background:#e6e6e6;"></div>
<div style="position:absolute;left:788px;top:260px;width:23px;height:16px;background:#e6e6e6;"></div>
<svg width="12" height="10" viewBox="0 0 12 10" style="position:absolute;left:30px;top:262px"><path d="M1.4,2.6 L6.3,2.6 L6.3,0.9 L10.8,4.4 L6.3,7.9 L6.3,6.3 L1.4,6.3 Z" fill="url(#ag)" stroke="#dcbd38" stroke-width="0.8" stroke-linejoin="round"/></svg>
<div style="position:absolute;left:47px;top:261px;font-size:10px;line-height:14px;color:#111;white-space:nowrap;letter-spacing:-0.45px;">1840</div>
<div style="position:absolute;left:86px;top:261px;font-size:10px;line-height:14px;color:#111;white-space:nowrap;letter-spacing:-0.45px;width:28px;overflow:hidden;text-align:center;">0</div>
<div style="position:absolute;left:116px;top:261px;font-size:10px;line-height:14px;color:#111;white-space:nowrap;letter-spacing:0px;width:106px;overflow:hidden;text-align:left;">Goods Receipt</div>
<div style="position:absolute;left:224px;top:261px;font-size:10px;line-height:14px;color:#111;white-space:nowrap;letter-spacing:-0.45px;width:62px;overflow:hidden;text-align:left;">07.07.16</div>
<div style="position:absolute;left:288px;top:261px;font-size:10px;line-height:14px;color:#111;white-space:nowrap;letter-spacing:-0.45px;width:63px;overflow:hidden;text-align:left;">001076040</div>
<svg width="12" height="10" viewBox="0 0 12 10" style="position:absolute;left:354px;top:262px"><path d="M1.4,2.6 L6.3,2.6 L6.3,0.9 L10.8,4.4 L6.3,7.9 L6.3,6.3 L1.4,6.3 Z" fill="url(#ag)" stroke="#dcbd38" stroke-width="0.8" stroke-linejoin="round"/></svg>
<div style="position:absolute;left:371px;top:261px;font-size:10px;line-height:14px;color:#111;white-space:nowrap;letter-spacing:-0.45px;width:47px;overflow:hidden;text-align:left;">2511215</div>
<div style="position:absolute;left:420px;top:261px;font-size:10px;line-height:14px;color:#111;white-space:nowrap;letter-spacing:0px;width:94px;overflow:hidden;text-align:left;">Gear Box, Semiconductor</div>
<div style="position:absolute;left:520px;top:261px;font-size:10px;line-height:14px;color:#1e8c1e;white-space:nowrap;letter-spacing:-0.45px;width:40px;overflow:hidden;text-align:right;">1.00</div>
<div style="position:absolute;left:561px;top:261px;font-size:10px;line-height:14px;color:#2a2a9a;white-space:nowrap;letter-spacing:-0.45px;width:32px;overflow:hidden;text-align:right;">0.00</div>
<div style="position:absolute;left:594px;top:261px;font-size:10px;line-height:14px;color:#111;white-space:nowrap;letter-spacing:-0.45px;width:62px;overflow:hidden;text-align:center;">09</div>
<div style="position:absolute;left:658px;top:261px;font-size:10px;line-height:14px;color:#111;white-space:nowrap;letter-spacing:0px;width:55px;overflow:hidden;text-align:left;"></div>
<div style="position:absolute;left:715px;top:261px;font-size:10px;line-height:14px;color:#111;white-space:nowrap;letter-spacing:0px;width:72px;overflow:hidden;text-align:left;">Franz Harald Zimmermann</div>
<div style="position:absolute;left:789px;top:261px;font-size:10px;line-height:14px;color:#111;white-space:nowrap;letter-spacing:0px;width:23px;overflow:hidden;text-align:left;">manager</div>
<div style="position:absolute;left:6px;top:277px;width:21px;height:16px;background:linear-gradient(#dfe3e8,#d3d8df);"></div>
<div style="position:absolute;left:6px;top:292px;width:21px;height:1px;background:#a9c7e8;"></div>
<div style="position:absolute;left:8px;top:279px;font-size:10px;line-height:14px;color:#111;white-space:nowrap;letter-spacing:-0.45px;">9</div>
<div style="position:absolute;left:28px;top:277px;width:57px;height:16px;background:#e6e6e6;"></div>
<div style="position:absolute;left:86px;top:277px;width:28px;height:16px;background:#e6e6e6;"></div>
<div style="position:absolute;left:115px;top:277px;width:107px;height:16px;background:#e6e6e6;"></div>
<div style="position:absolute;left:223px;top:277px;width:63px;height:16px;background:#e6e6e6;"></div>
<div style="position:absolute;left:287px;top:277px;width:64px;height:16px;background:#e6e6e6;"></div>
<div style="position:absolute;left:352px;top:277px;width:66px;height:16px;background:#e6e6e6;"></div>
<div style="position:absolute;left:419px;top:277px;width:95px;height:16px;background:#e6e6e6;"></div>
<div style="position:absolute;left:515px;top:277px;width:4px;height:16px;background:#e6e6e6;"></div>
<div style="position:absolute;left:520px;top:277px;width:40px;height:16px;background:#e6e6e6;"></div>
<div style="position:absolute;left:561px;top:277px;width:32px;height:16px;background:#e6e6e6;"></div>
<div style="position:absolute;left:594px;top:277px;width:62px;height:16px;background:#e6e6e6;"></div>
<div style="position:absolute;left:657px;top:277px;width:56px;height:16px;background:#e6e6e6;"></div>
<div style="position:absolute;left:714px;top:277px;width:73px;height:16px;background:#e6e6e6;"></div>
<div style="position:absolute;left:788px;top:277px;width:23px;height:16px;background:#e6e6e6;"></div>
<svg width="12" height="10" viewBox="0 0 12 10" style="position:absolute;left:30px;top:279px"><path d="M1.4,2.6 L6.3,2.6 L6.3,0.9 L10.8,4.4 L6.3,7.9 L6.3,6.3 L1.4,6.3 Z" fill="url(#ag)" stroke="#dcbd38" stroke-width="0.8" stroke-linejoin="round"/></svg>
<div style="position:absolute;left:47px;top:278px;font-size:10px;line-height:14px;color:#111;white-space:nowrap;letter-spacing:-0.45px;">1839</div>
<div style="position:absolute;left:86px;top:278px;font-size:10px;line-height:14px;color:#111;white-space:nowrap;letter-spacing:-0.45px;width:28px;overflow:hidden;text-align:center;">0</div>
<div style="position:absolute;left:116px;top:278px;font-size:10px;line-height:14px;color:#111;white-space:nowrap;letter-spacing:0px;width:106px;overflow:hidden;text-align:left;">Goods Receipt</div>
<div style="position:absolute;left:224px;top:278px;font-size:10px;line-height:14px;color:#111;white-space:nowrap;letter-spacing:-0.45px;width:62px;overflow:hidden;text-align:left;">07.07.16</div>
<div style="position:absolute;left:288px;top:278px;font-size:10px;line-height:14px;color:#111;white-space:nowrap;letter-spacing:-0.45px;width:63px;overflow:hidden;text-align:left;">001076010</div>
<svg width="12" height="10" viewBox="0 0 12 10" style="position:absolute;left:354px;top:279px"><path d="M1.4,2.6 L6.3,2.6 L6.3,0.9 L10.8,4.4 L6.3,7.9 L6.3,6.3 L1.4,6.3 Z" fill="url(#ag)" stroke="#dcbd38" stroke-width="0.8" stroke-linejoin="round"/></svg>
<div style="position:absolute;left:371px;top:278px;font-size:10px;line-height:14px;color:#111;white-space:nowrap;letter-spacing:-0.45px;width:47px;overflow:hidden;text-align:left;">2511215</div>
<div style="position:absolute;left:420px;top:278px;font-size:10px;line-height:14px;color:#111;white-space:nowrap;letter-spacing:0px;width:94px;overflow:hidden;text-align:left;">Gear Box, Semiconductor</div>
<div style="position:absolute;left:520px;top:278px;font-size:10px;line-height:14px;color:#1e8c1e;white-space:nowrap;letter-spacing:-0.45px;width:40px;overflow:hidden;text-align:right;">1.00</div>
<div style="position:absolute;left:561px;top:278px;font-size:10px;line-height:14px;color:#2a2a9a;white-space:nowrap;letter-spacing:-0.45px;width:32px;overflow:hidden;text-align:right;">0.00</div>
<div style="position:absolute;left:594px;top:278px;font-size:10px;line-height:14px;color:#111;white-space:nowrap;letter-spacing:-0.45px;width:62px;overflow:hidden;text-align:center;">09</div>
<div style="position:absolute;left:658px;top:278px;font-size:10px;line-height:14px;color:#111;white-space:nowrap;letter-spacing:0px;width:55px;overflow:hidden;text-align:left;"></div>
<div style="position:absolute;left:715px;top:278px;font-size:10px;line-height:14px;color:#111;white-space:nowrap;letter-spacing:0px;width:72px;overflow:hidden;text-align:left;">Franz Harald Zimmermann</div>
<div style="position:absolute;left:789px;top:278px;font-size:10px;line-height:14px;color:#111;white-space:nowrap;letter-spacing:0px;width:23px;overflow:hidden;text-align:left;">manager</div>
<div style="position:absolute;left:6px;top:294px;width:21px;height:16px;background:linear-gradient(#dfe3e8,#d3d8df);"></div>
<div style="position:absolute;left:6px;top:309px;width:21px;height:1px;background:#a9c7e8;"></div>
<div style="position:absolute;left:8px;top:296px;font-size:10px;line-height:14px;color:#111;white-space:nowrap;letter-spacing:-0.45px;">10</div>
<div style="position:absolute;left:28px;top:294px;width:57px;height:16px;background:#e6e6e6;"></div>
<div style="position:absolute;left:86px;top:294px;width:28px;height:16px;background:#e6e6e6;"></div>
<div style="position:absolute;left:115px;top:294px;width:107px;height:16px;background:#e6e6e6;"></div>
<div style="position:absolute;left:223px;top:294px;width:63px;height:16px;background:#e6e6e6;"></div>
<div style="position:absolute;left:287px;top:294px;width:64px;height:16px;background:#e6e6e6;"></div>
<div style="position:absolute;left:352px;top:294px;width:66px;height:16px;background:#e6e6e6;"></div>
<div style="position:absolute;left:419px;top:294px;width:95px;height:16px;background:#e6e6e6;"></div>
<div style="position:absolute;left:515px;top:294px;width:4px;height:16px;background:#e6e6e6;"></div>
<div style="position:absolute;left:520px;top:294px;width:40px;height:16px;background:#e6e6e6;"></div>
<div style="position:absolute;left:561px;top:294px;width:32px;height:16px;background:#e6e6e6;"></div>
<div style="position:absolute;left:594px;top:294px;width:62px;height:16px;background:#e6e6e6;"></div>
<div style="position:absolute;left:657px;top:294px;width:56px;height:16px;background:#e6e6e6;"></div>
<div style="position:absolute;left:714px;top:294px;width:73px;height:16px;background:#e6e6e6;"></div>
<div style="position:absolute;left:788px;top:294px;width:23px;height:16px;background:#e6e6e6;"></div>
<svg width="12" height="10" viewBox="0 0 12 10" style="position:absolute;left:30px;top:296px"><path d="M1.4,2.6 L6.3,2.6 L6.3,0.9 L10.8,4.4 L6.3,7.9 L6.3,6.3 L1.4,6.3 Z" fill="url(#ag)" stroke="#dcbd38" stroke-width="0.8" stroke-linejoin="round"/></svg>
<div style="position:absolute;left:47px;top:295px;font-size:10px;line-height:14px;color:#111;white-space:nowrap;letter-spacing:-0.45px;">1838</div>
<div style="position:absolute;left:86px;top:295px;font-size:10px;line-height:14px;color:#111;white-space:nowrap;letter-spacing:-0.45px;width:28px;overflow:hidden;text-align:center;">0</div>
<div style="position:absolute;left:116px;top:295px;font-size:10px;line-height:14px;color:#111;white-space:nowrap;letter-spacing:0px;width:106px;overflow:hidden;text-align:left;">Goods Receipt</div>
<div style="position:absolute;left:224px;top:295px;font-size:10px;line-height:14px;color:#111;white-space:nowrap;letter-spacing:-0.45px;width:62px;overflow:hidden;text-align:left;">07.07.16</div>
<div style="position:absolute;left:288px;top:295px;font-size:10px;line-height:14px;color:#111;white-space:nowrap;letter-spacing:-0.45px;width:63px;overflow:hidden;text-align:left;">001076040</div>
<svg width="12" height="10" viewBox="0 0 12 10" style="position:absolute;left:354px;top:296px"><path d="M1.4,2.6 L6.3,2.6 L6.3,0.9 L10.8,4.4 L6.3,7.9 L6.3,6.3 L1.4,6.3 Z" fill="url(#ag)" stroke="#dcbd38" stroke-width="0.8" stroke-linejoin="round"/></svg>
<div style="position:absolute;left:371px;top:295px;font-size:10px;line-height:14px;color:#111;white-space:nowrap;letter-spacing:-0.45px;width:47px;overflow:hidden;text-align:left;">2511215</div>
<div style="position:absolute;left:420px;top:295px;font-size:10px;line-height:14px;color:#111;white-space:nowrap;letter-spacing:0px;width:94px;overflow:hidden;text-align:left;">Gear Box, Semiconductor</div>
<div style="position:absolute;left:520px;top:295px;font-size:10px;line-height:14px;color:#1e8c1e;white-space:nowrap;letter-spacing:-0.45px;width:40px;overflow:hidden;text-align:right;">1.00</div>
<div style="position:absolute;left:561px;top:295px;font-size:10px;line-height:14px;color:#2a2a9a;white-space:nowrap;letter-spacing:-0.45px;width:32px;overflow:hidden;text-align:right;">0.00</div>
<div style="position:absolute;left:594px;top:295px;font-size:10px;line-height:14px;color:#111;white-space:nowrap;letter-spacing:-0.45px;width:62px;overflow:hidden;text-align:center;">09</div>
<div style="position:absolute;left:658px;top:295px;font-size:10px;line-height:14px;color:#111;white-space:nowrap;letter-spacing:0px;width:55px;overflow:hidden;text-align:left;"></div>
<div style="position:absolute;left:715px;top:295px;font-size:10px;line-height:14px;color:#111;white-space:nowrap;letter-spacing:0px;width:72px;overflow:hidden;text-align:left;">Franz Harald Zimmermann</div>
<div style="position:absolute;left:789px;top:295px;font-size:10px;line-height:14px;color:#111;white-space:nowrap;letter-spacing:0px;width:23px;overflow:hidden;text-align:left;">manager</div>
<div style="position:absolute;left:6px;top:311px;width:21px;height:16px;background:linear-gradient(#dfe3e8,#d3d8df);"></div>
<div style="position:absolute;left:6px;top:326px;width:21px;height:1px;background:#a9c7e8;"></div>
<div style="position:absolute;left:8px;top:313px;font-size:10px;line-height:14px;color:#111;white-space:nowrap;letter-spacing:-0.45px;">11</div>
<div style="position:absolute;left:28px;top:311px;width:57px;height:16px;background:#e6e6e6;"></div>
<div style="position:absolute;left:86px;top:311px;width:28px;height:16px;background:#e6e6e6;"></div>
<div style="position:absolute;left:115px;top:311px;width:107px;height:16px;background:#e6e6e6;"></div>
<div style="position:absolute;left:223px;top:311px;width:63px;height:16px;background:#e6e6e6;"></div>
<div style="position:absolute;left:287px;top:311px;width:64px;height:16px;background:#e6e6e6;"></div>
<div style="position:absolute;left:352px;top:311px;width:66px;height:16px;background:#e6e6e6;"></div>
<div style="position:absolute;left:419px;top:311px;width:95px;height:16px;background:#e6e6e6;"></div>
<div style="position:absolute;left:515px;top:311px;width:4px;height:16px;background:#e6e6e6;"></div>
<div style="position:absolute;left:520px;top:311px;width:40px;height:16px;background:#e6e6e6;"></div>
<div style="position:absolute;left:561px;top:311px;width:32px;height:16px;background:#e6e6e6;"></div>
<div style="position:absolute;left:594px;top:311px;width:62px;height:16px;background:#e6e6e6;"></div>
<div style="position:absolute;left:657px;top:311px;width:56px;height:16px;background:#e6e6e6;"></div>
<div style="position:absolute;left:714px;top:311px;width:73px;height:16px;background:#e6e6e6;"></div>
<div style="position:absolute;left:788px;top:311px;width:23px;height:16px;background:#e6e6e6;"></div>
<svg width="12" height="10" viewBox="0 0 12 10" style="position:absolute;left:30px;top:313px"><path d="M1.4,2.6 L6.3,2.6 L6.3,0.9 L10.8,4.4 L6.3,7.9 L6.3,6.3 L1.4,6.3 Z" fill="url(#ag)" stroke="#dcbd38" stroke-width="0.8" stroke-linejoin="round"/></svg>
<div style="position:absolute;left:47px;top:312px;font-size:10px;line-height:14px;color:#111;white-space:nowrap;letter-spacing:-0.45px;">1837</div>
<div style="position:absolute;left:86px;top:312px;font-size:10px;line-height:14px;color:#111;white-space:nowrap;letter-spacing:-0.45px;width:28px;overflow:hidden;text-align:center;">0</div>
<div style="position:absolute;left:116px;top:312px;font-size:10px;line-height:14px;color:#111;white-space:nowrap;letter-spacing:0px;width:106px;overflow:hidden;text-align:left;">Goods Receipt</div>
<div style="position:absolute;left:224px;top:312px;font-size:10px;line-height:14px;color:#111;white-space:nowrap;letter-spacing:-0.45px;width:62px;overflow:hidden;text-align:left;">07.07.16</div>
<div style="position:absolute;left:288px;top:312px;font-size:10px;line-height:14px;color:#111;white-space:nowrap;letter-spacing:-0.45px;width:63px;overflow:hidden;text-align:left;">001076040</div>
<svg width="12" height="10" viewBox="0 0 12 10" style="position:absolute;left:354px;top:313px"><path d="M1.4,2.6 L6.3,2.6 L6.3,0.9 L10.8,4.4 L6.3,7.9 L6.3,6.3 L1.4,6.3 Z" fill="url(#ag)" stroke="#dcbd38" stroke-width="0.8" stroke-linejoin="round"/></svg>
<div style="position:absolute;left:371px;top:312px;font-size:10px;line-height:14px;color:#111;white-space:nowrap;letter-spacing:-0.45px;width:47px;overflow:hidden;text-align:left;">2511215</div>
<div style="position:absolute;left:420px;top:312px;font-size:10px;line-height:14px;color:#111;white-space:nowrap;letter-spacing:0px;width:94px;overflow:hidden;text-align:left;">Gear Box, Semiconductor</div>
<div style="position:absolute;left:520px;top:312px;font-size:10px;line-height:14px;color:#1e8c1e;white-space:nowrap;letter-spacing:-0.45px;width:40px;overflow:hidden;text-align:right;">1.00</div>
<div style="position:absolute;left:561px;top:312px;font-size:10px;line-height:14px;color:#2a2a9a;white-space:nowrap;letter-spacing:-0.45px;width:32px;overflow:hidden;text-align:right;">0.00</div>
<div style="position:absolute;left:594px;top:312px;font-size:10px;line-height:14px;color:#111;white-space:nowrap;letter-spacing:-0.45px;width:62px;overflow:hidden;text-align:center;">09</div>
<div style="position:absolute;left:658px;top:312px;font-size:10px;line-height:14px;color:#111;white-space:nowrap;letter-spacing:0px;width:55px;overflow:hidden;text-align:left;"></div>
<div style="position:absolute;left:715px;top:312px;font-size:10px;line-height:14px;color:#111;white-space:nowrap;letter-spacing:0px;width:72px;overflow:hidden;text-align:left;">Franz Harald Zimmermann</div>
<div style="position:absolute;left:789px;top:312px;font-size:10px;line-height:14px;color:#111;white-space:nowrap;letter-spacing:0px;width:23px;overflow:hidden;text-align:left;">manager</div>
<div style="position:absolute;left:6px;top:328px;width:21px;height:16px;background:linear-gradient(#dfe3e8,#d3d8df);"></div>
<div style="position:absolute;left:6px;top:343px;width:21px;height:1px;background:#a9c7e8;"></div>
<div style="position:absolute;left:8px;top:330px;font-size:10px;line-height:14px;color:#111;white-space:nowrap;letter-spacing:-0.45px;">12</div>
<div style="position:absolute;left:28px;top:328px;width:57px;height:16px;background:#e6e6e6;"></div>
<div style="position:absolute;left:86px;top:328px;width:28px;height:16px;background:#e6e6e6;"></div>
<div style="position:absolute;left:115px;top:328px;width:107px;height:16px;background:#e6e6e6;"></div>
<div style="position:absolute;left:223px;top:328px;width:63px;height:16px;background:#e6e6e6;"></div>
<div style="position:absolute;left:287px;top:328px;width:64px;height:16px;background:#e6e6e6;"></div>
<div style="position:absolute;left:352px;top:328px;width:66px;height:16px;background:#e6e6e6;"></div>
<div style="position:absolute;left:419px;top:328px;width:95px;height:16px;background:#e6e6e6;"></div>
<div style="position:absolute;left:515px;top:328px;width:4px;height:16px;background:#e6e6e6;"></div>
<div style="position:absolute;left:520px;top:328px;width:40px;height:16px;background:#e6e6e6;"></div>
<div style="position:absolute;left:561px;top:328px;width:32px;height:16px;background:#e6e6e6;"></div>
<div style="position:absolute;left:594px;top:328px;width:62px;height:16px;background:#e6e6e6;"></div>
<div style="position:absolute;left:657px;top:328px;width:56px;height:16px;background:#e6e6e6;"></div>
<div style="position:absolute;left:714px;top:328px;width:73px;height:16px;background:#e6e6e6;"></div>
<div style="position:absolute;left:788px;top:328px;width:23px;height:16px;background:#e6e6e6;"></div>
<svg width="12" height="10" viewBox="0 0 12 10" style="position:absolute;left:30px;top:330px"><path d="M1.4,2.6 L6.3,2.6 L6.3,0.9 L10.8,4.4 L6.3,7.9 L6.3,6.3 L1.4,6.3 Z" fill="url(#ag)" stroke="#dcbd38" stroke-width="0.8" stroke-linejoin="round"/></svg>
<div style="position:absolute;left:47px;top:329px;font-size:10px;line-height:14px;color:#111;white-space:nowrap;letter-spacing:-0.45px;">5000</div>
<div style="position:absolute;left:86px;top:329px;font-size:10px;line-height:14px;color:#111;white-space:nowrap;letter-spacing:-0.45px;width:28px;overflow:hidden;text-align:center;">0</div>
<div style="position:absolute;left:116px;top:329px;font-size:10px;line-height:14px;color:#111;white-space:nowrap;letter-spacing:0px;width:106px;overflow:hidden;text-align:left;">Goods Receipt PO - V20000</div>
<div style="position:absolute;left:224px;top:329px;font-size:10px;line-height:14px;color:#111;white-space:nowrap;letter-spacing:-0.45px;width:62px;overflow:hidden;text-align:left;">25.05.16</div>
<div style="position:absolute;left:288px;top:329px;font-size:10px;line-height:14px;color:#111;white-space:nowrap;letter-spacing:0px;width:63px;overflow:hidden;text-align:left;"></div>
<svg width="12" height="10" viewBox="0 0 12 10" style="position:absolute;left:354px;top:330px"><path d="M1.4,2.6 L6.3,2.6 L6.3,0.9 L10.8,4.4 L6.3,7.9 L6.3,6.3 L1.4,6.3 Z" fill="url(#ag)" stroke="#dcbd38" stroke-width="0.8" stroke-linejoin="round"/></svg>
<div style="position:absolute;left:371px;top:329px;font-size:10px;line-height:14px;color:#111;white-space:nowrap;letter-spacing:-0.45px;width:47px;overflow:hidden;text-align:left;">2511215</div>
<div style="position:absolute;left:420px;top:329px;font-size:10px;line-height:14px;color:#111;white-space:nowrap;letter-spacing:0px;width:94px;overflow:hidden;text-align:left;">Gear Box, Semiconductor</div>
<div style="position:absolute;left:520px;top:329px;font-size:10px;line-height:14px;color:#1e8c1e;white-space:nowrap;letter-spacing:-0.45px;width:40px;overflow:hidden;text-align:right;">17.00</div>
<div style="position:absolute;left:561px;top:329px;font-size:10px;line-height:14px;color:#2a2a9a;white-space:nowrap;letter-spacing:-0.45px;width:32px;overflow:hidden;text-align:right;">0.00</div>
<div style="position:absolute;left:594px;top:329px;font-size:10px;line-height:14px;color:#111;white-space:nowrap;letter-spacing:-0.45px;width:62px;overflow:hidden;text-align:center;">09</div>
<div style="position:absolute;left:658px;top:329px;font-size:10px;line-height:14px;color:#111;white-space:nowrap;letter-spacing:0px;width:55px;overflow:hidden;text-align:left;"></div>
<div style="position:absolute;left:715px;top:329px;font-size:10px;line-height:14px;color:#111;white-space:nowrap;letter-spacing:0px;width:72px;overflow:hidden;text-align:left;"></div>
<div style="position:absolute;left:789px;top:329px;font-size:10px;line-height:14px;color:#111;white-space:nowrap;letter-spacing:0px;width:23px;overflow:hidden;text-align:left;">manager</div>
<div style="position:absolute;left:6px;top:345px;width:21px;height:16px;background:linear-gradient(#dfe3e8,#d3d8df);"></div>
<div style="position:absolute;left:6px;top:360px;width:21px;height:1px;background:#a9c7e8;"></div>
<div style="position:absolute;left:8px;top:347px;font-size:10px;line-height:14px;color:#111;white-space:nowrap;letter-spacing:-0.45px;">13</div>
<div style="position:absolute;left:28px;top:345px;width:57px;height:16px;background:#e6e6e6;"></div>
<div style="position:absolute;left:86px;top:345px;width:28px;height:16px;background:#e6e6e6;"></div>
<div style="position:absolute;left:115px;top:345px;width:107px;height:16px;background:#e6e6e6;"></div>
<div style="position:absolute;left:223px;top:345px;width:63px;height:16px;background:#e6e6e6;"></div>
<div style="position:absolute;left:287px;top:345px;width:64px;height:16px;background:#e6e6e6;"></div>
<div style="position:absolute;left:352px;top:345px;width:66px;height:16px;background:#e6e6e6;"></div>
<div style="position:absolute;left:419px;top:345px;width:95px;height:16px;background:#e6e6e6;"></div>
<div style="position:absolute;left:515px;top:345px;width:4px;height:16px;background:#e6e6e6;"></div>
<div style="position:absolute;left:520px;top:345px;width:40px;height:16px;background:#e6e6e6;"></div>
<div style="position:absolute;left:561px;top:345px;width:32px;height:16px;background:#e6e6e6;"></div>
<div style="position:absolute;left:594px;top:345px;width:62px;height:16px;background:#e6e6e6;"></div>
<div style="position:absolute;left:657px;top:345px;width:56px;height:16px;background:#e6e6e6;"></div>
<div style="position:absolute;left:714px;top:345px;width:73px;height:16px;background:#e6e6e6;"></div>
<div style="position:absolute;left:788px;top:345px;width:23px;height:16px;background:#e6e6e6;"></div>
<svg width="12" height="10" viewBox="0 0 12 10" style="position:absolute;left:30px;top:347px"><path d="M1.4,2.6 L6.3,2.6 L6.3,0.9 L10.8,4.4 L6.3,7.9 L6.3,6.3 L1.4,6.3 Z" fill="url(#ag)" stroke="#dcbd38" stroke-width="0.8" stroke-linejoin="round"/></svg>
<div style="position:absolute;left:47px;top:346px;font-size:10px;line-height:14px;color:#111;white-space:nowrap;letter-spacing:-0.45px;">38</div>
<div style="position:absolute;left:86px;top:346px;font-size:10px;line-height:14px;color:#111;white-space:nowrap;letter-spacing:-0.45px;width:28px;overflow:hidden;text-align:center;">0</div>
<div style="position:absolute;left:116px;top:346px;font-size:10px;line-height:14px;color:#111;white-space:nowrap;letter-spacing:0px;width:106px;overflow:hidden;text-align:left;">Deliveries - C23900</div>
<div style="position:absolute;left:224px;top:346px;font-size:10px;line-height:14px;color:#111;white-space:nowrap;letter-spacing:-0.45px;width:62px;overflow:hidden;text-align:left;">06.05.16</div>
<div style="position:absolute;left:288px;top:346px;font-size:10px;line-height:14px;color:#111;white-space:nowrap;letter-spacing:0px;width:63px;overflow:hidden;text-align:left;"></div>
<svg width="12" height="10" viewBox="0 0 12 10" style="position:absolute;left:354px;top:347px"><path d="M1.4,2.6 L6.3,2.6 L6.3,0.9 L10.8,4.4 L6.3,7.9 L6.3,6.3 L1.4,6.3 Z" fill="url(#ag)" stroke="#dcbd38" stroke-width="0.8" stroke-linejoin="round"/></svg>
<div style="position:absolute;left:371px;top:346px;font-size:10px;line-height:14px;color:#111;white-space:nowrap;letter-spacing:-0.45px;width:47px;overflow:hidden;text-align:left;">2511215</div>
<div style="position:absolute;left:420px;top:346px;font-size:10px;line-height:14px;color:#111;white-space:nowrap;letter-spacing:0px;width:94px;overflow:hidden;text-align:left;">Gear Box, Semiconductor</div>
<div style="position:absolute;left:520px;top:346px;font-size:10px;line-height:14px;color:#1e8c1e;white-space:nowrap;letter-spacing:-0.45px;width:40px;overflow:hidden;text-align:right;">0.00</div>
<div style="position:absolute;left:561px;top:346px;font-size:10px;line-height:14px;color:#2a2a9a;white-space:nowrap;letter-spacing:-0.45px;width:32px;overflow:hidden;text-align:right;">1.00</div>
<div style="position:absolute;left:594px;top:346px;font-size:10px;line-height:14px;color:#111;white-space:nowrap;letter-spacing:-0.45px;width:62px;overflow:hidden;text-align:center;">09</div>
<div style="position:absolute;left:658px;top:346px;font-size:10px;line-height:14px;color:#111;white-space:nowrap;letter-spacing:0px;width:55px;overflow:hidden;text-align:left;"></div>
<div style="position:absolute;left:715px;top:346px;font-size:10px;line-height:14px;color:#111;white-space:nowrap;letter-spacing:0px;width:72px;overflow:hidden;text-align:left;"></div>
<div style="position:absolute;left:789px;top:346px;font-size:10px;line-height:14px;color:#111;white-space:nowrap;letter-spacing:0px;width:23px;overflow:hidden;text-align:left;">manager</div>
<div style="position:absolute;left:6px;top:362px;width:21px;height:16px;background:linear-gradient(#dfe3e8,#d3d8df);"></div>
<div style="position:absolute;left:6px;top:377px;width:21px;height:1px;background:#a9c7e8;"></div>
<div style="position:absolute;left:8px;top:364px;font-size:10px;line-height:14px;color:#111;white-space:nowrap;letter-spacing:-0.45px;">14</div>
<div style="position:absolute;left:28px;top:362px;width:57px;height:16px;background:#e6e6e6;"></div>
<div style="position:absolute;left:86px;top:362px;width:28px;height:16px;background:#e6e6e6;"></div>
<div style="position:absolute;left:115px;top:362px;width:107px;height:16px;background:#e6e6e6;"></div>
<div style="position:absolute;left:223px;top:362px;width:63px;height:16px;background:#e6e6e6;"></div>
<div style="position:absolute;left:287px;top:362px;width:64px;height:16px;background:#e6e6e6;"></div>
<div style="position:absolute;left:352px;top:362px;width:66px;height:16px;background:#e6e6e6;"></div>
<div style="position:absolute;left:419px;top:362px;width:95px;height:16px;background:#e6e6e6;"></div>
<div style="position:absolute;left:515px;top:362px;width:4px;height:16px;background:#e6e6e6;"></div>
<div style="position:absolute;left:520px;top:362px;width:40px;height:16px;background:#e6e6e6;"></div>
<div style="position:absolute;left:561px;top:362px;width:32px;height:16px;background:#e6e6e6;"></div>
<div style="position:absolute;left:594px;top:362px;width:62px;height:16px;background:#e6e6e6;"></div>
<div style="position:absolute;left:657px;top:362px;width:56px;height:16px;background:#e6e6e6;"></div>
<div style="position:absolute;left:714px;top:362px;width:73px;height:16px;background:#e6e6e6;"></div>
<div style="position:absolute;left:788px;top:362px;width:23px;height:16px;background:#e6e6e6;"></div>
<svg width="12" height="10" viewBox="0 0 12 10" style="position:absolute;left:30px;top:364px"><path d="M1.4,2.6 L6.3,2.6 L6.3,0.9 L10.8,4.4 L6.3,7.9 L6.3,6.3 L1.4,6.3 Z" fill="url(#ag)" stroke="#dcbd38" stroke-width="0.8" stroke-linejoin="round"/></svg>
<div style="position:absolute;left:47px;top:363px;font-size:10px;line-height:14px;color:#111;white-space:nowrap;letter-spacing:-0.45px;">37</div>
<div style="position:absolute;left:86px;top:363px;font-size:10px;line-height:14px;color:#111;white-space:nowrap;letter-spacing:-0.45px;width:28px;overflow:hidden;text-align:center;">0</div>
<div style="position:absolute;left:116px;top:363px;font-size:10px;line-height:14px;color:#111;white-space:nowrap;letter-spacing:0px;width:106px;overflow:hidden;text-align:left;">Deliveries - C40002</div>
<div style="position:absolute;left:224px;top:363px;font-size:10px;line-height:14px;color:#111;white-space:nowrap;letter-spacing:-0.45px;width:62px;overflow:hidden;text-align:left;">06.05.16</div>
<div style="position:absolute;left:288px;top:363px;font-size:10px;line-height:14px;color:#111;white-space:nowrap;letter-spacing:0px;width:63px;overflow:hidden;text-align:left;"></div>
<svg width="12" height="10" viewBox="0 0 12 10" style="position:absolute;left:354px;top:364px"><path d="M1.4,2.6 L6.3,2.6 L6.3,0.9 L10.8,4.4 L6.3,7.9 L6.3,6.3 L1.4,6.3 Z" fill="url(#ag)" stroke="#dcbd38" stroke-width="0.8" stroke-linejoin="round"/></svg>
<div style="position:absolute;left:371px;top:363px;font-size:10px;line-height:14px;color:#111;white-space:nowrap;letter-spacing:-0.45px;width:47px;overflow:hidden;text-align:left;">2511215</div>
<div style="position:absolute;left:420px;top:363px;font-size:10px;line-height:14px;color:#111;white-space:nowrap;letter-spacing:0px;width:94px;overflow:hidden;text-align:left;">Gear Box, Semiconductor</div>
<div style="position:absolute;left:520px;top:363px;font-size:10px;line-height:14px;color:#1e8c1e;white-space:nowrap;letter-spacing:-0.45px;width:40px;overflow:hidden;text-align:right;">0.00</div>
<div style="position:absolute;left:561px;top:363px;font-size:10px;line-height:14px;color:#2a2a9a;white-space:nowrap;letter-spacing:-0.45px;width:32px;overflow:hidden;text-align:right;">1.00</div>
<div style="position:absolute;left:594px;top:363px;font-size:10px;line-height:14px;color:#111;white-space:nowrap;letter-spacing:-0.45px;width:62px;overflow:hidden;text-align:center;">09</div>
<div style="position:absolute;left:658px;top:363px;font-size:10px;line-height:14px;color:#111;white-space:nowrap;letter-spacing:0px;width:55px;overflow:hidden;text-align:left;"></div>
<div style="position:absolute;left:715px;top:363px;font-size:10px;line-height:14px;color:#111;white-space:nowrap;letter-spacing:0px;width:72px;overflow:hidden;text-align:left;"></div>
<div style="position:absolute;left:789px;top:363px;font-size:10px;line-height:14px;color:#111;white-space:nowrap;letter-spacing:0px;width:23px;overflow:hidden;text-align:left;">manager</div>
<div style="position:absolute;left:6px;top:379px;width:21px;height:16px;background:linear-gradient(#dfe3e8,#d3d8df);"></div>
<div style="position:absolute;left:6px;top:394px;width:21px;height:1px;background:#a9c7e8;"></div>
<div style="position:absolute;left:8px;top:381px;font-size:10px;line-height:14px;color:#111;white-space:nowrap;letter-spacing:-0.45px;">15</div>
<div style="position:absolute;left:28px;top:379px;width:57px;height:16px;background:#e6e6e6;"></div>
<div style="position:absolute;left:86px;top:379px;width:28px;height:16px;background:#e6e6e6;"></div>
<div style="position:absolute;left:115px;top:379px;width:107px;height:16px;background:#e6e6e6;"></div>
<div style="position:absolute;left:223px;top:379px;width:63px;height:16px;background:#e6e6e6;"></div>
<div style="position:absolute;left:287px;top:379px;width:64px;height:16px;background:#e6e6e6;"></div>
<div style="position:absolute;left:352px;top:379px;width:66px;height:16px;background:#e6e6e6;"></div>
<div style="position:absolute;left:419px;top:379px;width:95px;height:16px;background:#e6e6e6;"></div>
<div style="position:absolute;left:515px;top:379px;width:4px;height:16px;background:#e6e6e6;"></div>
<div style="position:absolute;left:520px;top:379px;width:40px;height:16px;background:#e6e6e6;"></div>
<div style="position:absolute;left:561px;top:379px;width:32px;height:16px;background:#e6e6e6;"></div>
<div style="position:absolute;left:594px;top:379px;width:62px;height:16px;background:#e6e6e6;"></div>
<div style="position:absolute;left:657px;top:379px;width:56px;height:16px;background:#e6e6e6;"></div>
<div style="position:absolute;left:714px;top:379px;width:73px;height:16px;background:#e6e6e6;"></div>
<div style="position:absolute;left:788px;top:379px;width:23px;height:16px;background:#e6e6e6;"></div>
<svg width="12" height="10" viewBox="0 0 12 10" style="position:absolute;left:30px;top:381px"><path d="M1.4,2.6 L6.3,2.6 L6.3,0.9 L10.8,4.4 L6.3,7.9 L6.3,6.3 L1.4,6.3 Z" fill="url(#ag)" stroke="#dcbd38" stroke-width="0.8" stroke-linejoin="round"/></svg>
<div style="position:absolute;left:47px;top:380px;font-size:10px;line-height:14px;color:#111;white-space:nowrap;letter-spacing:-0.45px;">656</div>
<div style="position:absolute;left:86px;top:380px;font-size:10px;line-height:14px;color:#111;white-space:nowrap;letter-spacing:-0.45px;width:28px;overflow:hidden;text-align:center;">0</div>
<div style="position:absolute;left:116px;top:380px;font-size:10px;line-height:14px;color:#111;white-space:nowrap;letter-spacing:0px;width:106px;overflow:hidden;text-align:left;">Goods Receipt PO - V10000</div>
<div style="position:absolute;left:224px;top:380px;font-size:10px;line-height:14px;color:#111;white-space:nowrap;letter-spacing:-0.45px;width:62px;overflow:hidden;text-align:left;">16.03.16</div>
<div style="position:absolute;left:288px;top:380px;font-size:10px;line-height:14px;color:#111;white-space:nowrap;letter-spacing:0px;width:63px;overflow:hidden;text-align:left;"></div>
<svg width="12" height="10" viewBox="0 0 12 10" style="position:absolute;left:354px;top:381px"><path d="M1.4,2.6 L6.3,2.6 L6.3,0.9 L10.8,4.4 L6.3,7.9 L6.3,6.3 L1.4,6.3 Z" fill="url(#ag)" stroke="#dcbd38" stroke-width="0.8" stroke-linejoin="round"/></svg>
<div style="position:absolute;left:371px;top:380px;font-size:10px;line-height:14px;color:#111;white-space:nowrap;letter-spacing:-0.45px;width:47px;overflow:hidden;text-align:left;">2511215</div>
<div style="position:absolute;left:420px;top:380px;font-size:10px;line-height:14px;color:#111;white-space:nowrap;letter-spacing:0px;width:94px;overflow:hidden;text-align:left;">default</div>
<div style="position:absolute;left:520px;top:380px;font-size:10px;line-height:14px;color:#1e8c1e;white-space:nowrap;letter-spacing:-0.45px;width:40px;overflow:hidden;text-align:right;">34.00</div>
<div style="position:absolute;left:561px;top:380px;font-size:10px;line-height:14px;color:#2a2a9a;white-space:nowrap;letter-spacing:-0.45px;width:32px;overflow:hidden;text-align:right;">0.00</div>
<div style="position:absolute;left:594px;top:380px;font-size:10px;line-height:14px;color:#111;white-space:nowrap;letter-spacing:0px;width:62px;overflow:hidden;text-align:center;">QC</div>
<div style="position:absolute;left:658px;top:380px;font-size:10px;line-height:14px;color:#111;white-space:nowrap;letter-spacing:0px;width:55px;overflow:hidden;text-align:left;"></div>
<div style="position:absolute;left:715px;top:380px;font-size:10px;line-height:14px;color:#111;white-space:nowrap;letter-spacing:0px;width:72px;overflow:hidden;text-align:left;">Franz Harald Zimmermann</div>
<div style="position:absolute;left:789px;top:380px;font-size:10px;line-height:14px;color:#111;white-space:nowrap;letter-spacing:0px;width:23px;overflow:hidden;text-align:left;">manager</div>
<div style="position:absolute;left:6px;top:396px;width:21px;height:16px;background:linear-gradient(#dfe3e8,#d3d8df);"></div>
<div style="position:absolute;left:6px;top:411px;width:21px;height:1px;background:#a9c7e8;"></div>
<div style="position:absolute;left:8px;top:398px;font-size:10px;line-height:14px;color:#111;white-space:nowrap;letter-spacing:-0.45px;">16</div>
<div style="position:absolute;left:28px;top:396px;width:57px;height:16px;background:#e6e6e6;"></div>
<div style="position:absolute;left:86px;top:396px;width:28px;height:16px;background:#e6e6e6;"></div>
<div style="position:absolute;left:115px;top:396px;width:107px;height:16px;background:#e6e6e6;"></div>
<div style="position:absolute;left:223px;top:396px;width:63px;height:16px;background:#e6e6e6;"></div>
<div style="position:absolute;left:287px;top:396px;width:64px;height:16px;background:#e6e6e6;"></div>
<div style="position:absolute;left:352px;top:396px;width:66px;height:16px;background:#e6e6e6;"></div>
<div style="position:absolute;left:419px;top:396px;width:95px;height:16px;background:#e6e6e6;"></div>
<div style="position:absolute;left:515px;top:396px;width:4px;height:16px;background:#e6e6e6;"></div>
<div style="position:absolute;left:520px;top:396px;width:40px;height:16px;background:#e6e6e6;"></div>
<div style="position:absolute;left:561px;top:396px;width:32px;height:16px;background:#e6e6e6;"></div>
<div style="position:absolute;left:594px;top:396px;width:62px;height:16px;background:#e6e6e6;"></div>
<div style="position:absolute;left:657px;top:396px;width:56px;height:16px;background:#e6e6e6;"></div>
<div style="position:absolute;left:714px;top:396px;width:73px;height:16px;background:#e6e6e6;"></div>
<div style="position:absolute;left:788px;top:396px;width:23px;height:16px;background:#e6e6e6;"></div>
<svg width="12" height="10" viewBox="0 0 12 10" style="position:absolute;left:30px;top:398px"><path d="M1.4,2.6 L6.3,2.6 L6.3,0.9 L10.8,4.4 L6.3,7.9 L6.3,6.3 L1.4,6.3 Z" fill="url(#ag)" stroke="#dcbd38" stroke-width="0.8" stroke-linejoin="round"/></svg>
<div style="position:absolute;left:47px;top:397px;font-size:10px;line-height:14px;color:#111;white-space:nowrap;letter-spacing:-0.45px;">1</div>
<div style="position:absolute;left:86px;top:397px;font-size:10px;line-height:14px;color:#111;white-space:nowrap;letter-spacing:-0.45px;width:28px;overflow:hidden;text-align:center;">0</div>
<div style="position:absolute;left:116px;top:397px;font-size:10px;line-height:14px;color:#111;white-space:nowrap;letter-spacing:0px;width:106px;overflow:hidden;text-align:left;">bin warehouse transfer</div>
<div style="position:absolute;left:224px;top:397px;font-size:10px;line-height:14px;color:#111;white-space:nowrap;letter-spacing:-0.45px;width:62px;overflow:hidden;text-align:left;">15.03.16</div>
<div style="position:absolute;left:288px;top:397px;font-size:10px;line-height:14px;color:#111;white-space:nowrap;letter-spacing:0px;width:63px;overflow:hidden;text-align:left;">Man. Korrek</div>
<svg width="12" height="10" viewBox="0 0 12 10" style="position:absolute;left:354px;top:398px"><path d="M1.4,2.6 L6.3,2.6 L6.3,0.9 L10.8,4.4 L6.3,7.9 L6.3,6.3 L1.4,6.3 Z" fill="url(#ag)" stroke="#dcbd38" stroke-width="0.8" stroke-linejoin="round"/></svg>
<div style="position:absolute;left:371px;top:397px;font-size:10px;line-height:14px;color:#111;white-space:nowrap;letter-spacing:-0.45px;width:47px;overflow:hidden;text-align:left;">2511215</div>
<div style="position:absolute;left:420px;top:397px;font-size:10px;line-height:14px;color:#111;white-space:nowrap;letter-spacing:0px;width:94px;overflow:hidden;text-align:left;">Fahrrad</div>
<div style="position:absolute;left:520px;top:397px;font-size:10px;line-height:14px;color:#1e8c1e;white-space:nowrap;letter-spacing:-0.45px;width:40px;overflow:hidden;text-align:right;">0.00</div>
<div style="position:absolute;left:561px;top:397px;font-size:10px;line-height:14px;color:#2a2a9a;white-space:nowrap;letter-spacing:-0.45px;width:32px;overflow:hidden;text-align:right;">2.00</div>
<div style="position:absolute;left:594px;top:397px;font-size:10px;line-height:14px;color:#111;white-space:nowrap;letter-spacing:0px;width:62px;overflow:hidden;text-align:center;">BW</div>
<div style="position:absolute;left:658px;top:397px;font-size:10px;line-height:14px;color:#111;white-space:nowrap;letter-spacing:0px;width:55px;overflow:hidden;text-align:left;">C-002001</div>
<div style="position:absolute;left:715px;top:397px;font-size:10px;line-height:14px;color:#111;white-space:nowrap;letter-spacing:0px;width:72px;overflow:hidden;text-align:left;"></div>
<div style="position:absolute;left:789px;top:397px;font-size:10px;line-height:14px;color:#111;white-space:nowrap;letter-spacing:0px;width:23px;overflow:hidden;text-align:left;">dba</div>
<div style="position:absolute;left:6px;top:413px;width:21px;height:16px;background:linear-gradient(#dfe3e8,#d3d8df);"></div>
<div style="position:absolute;left:6px;top:428px;width:21px;height:1px;background:#a9c7e8;"></div>
<div style="position:absolute;left:8px;top:415px;font-size:10px;line-height:14px;color:#111;white-space:nowrap;letter-spacing:-0.45px;">17</div>
<div style="position:absolute;left:28px;top:413px;width:57px;height:16px;background:#e6e6e6;"></div>
<div style="position:absolute;left:86px;top:413px;width:28px;height:16px;background:#e6e6e6;"></div>
<div style="position:absolute;left:115px;top:413px;width:107px;height:16px;background:#e6e6e6;"></div>
<div style="position:absolute;left:223px;top:413px;width:63px;height:16px;background:#e6e6e6;"></div>
<div style="position:absolute;left:287px;top:413px;width:64px;height:16px;background:#e6e6e6;"></div>
<div style="position:absolute;left:352px;top:413px;width:66px;height:16px;background:#e6e6e6;"></div>
<div style="position:absolute;left:419px;top:413px;width:95px;height:16px;background:#e6e6e6;"></div>
<div style="position:absolute;left:515px;top:413px;width:4px;height:16px;background:#e6e6e6;"></div>
<div style="position:absolute;left:520px;top:413px;width:40px;height:16px;background:#e6e6e6;"></div>
<div style="position:absolute;left:561px;top:413px;width:32px;height:16px;background:#e6e6e6;"></div>
<div style="position:absolute;left:594px;top:413px;width:62px;height:16px;background:#e6e6e6;"></div>
<div style="position:absolute;left:657px;top:413px;width:56px;height:16px;background:#e6e6e6;"></div>
<div style="position:absolute;left:714px;top:413px;width:73px;height:16px;background:#e6e6e6;"></div>
<div style="position:absolute;left:788px;top:413px;width:23px;height:16px;background:#e6e6e6;"></div>
<svg width="12" height="10" viewBox="0 0 12 10" style="position:absolute;left:30px;top:415px"><path d="M1.4,2.6 L6.3,2.6 L6.3,0.9 L10.8,4.4 L6.3,7.9 L6.3,6.3 L1.4,6.3 Z" fill="url(#ag)" stroke="#dcbd38" stroke-width="0.8" stroke-linejoin="round"/></svg>
<div style="position:absolute;left:47px;top:414px;font-size:10px;line-height:14px;color:#111;white-space:nowrap;letter-spacing:-0.45px;">1</div>
<div style="position:absolute;left:86px;top:414px;font-size:10px;line-height:14px;color:#111;white-space:nowrap;letter-spacing:-0.45px;width:28px;overflow:hidden;text-align:center;">0</div>
<div style="position:absolute;left:116px;top:414px;font-size:10px;line-height:14px;color:#111;white-space:nowrap;letter-spacing:0px;width:106px;overflow:hidden;text-align:left;">bin warehouse transfer</div>
<div style="position:absolute;left:224px;top:414px;font-size:10px;line-height:14px;color:#111;white-space:nowrap;letter-spacing:-0.45px;width:62px;overflow:hidden;text-align:left;">15.03.16</div>
<div style="position:absolute;left:288px;top:414px;font-size:10px;line-height:14px;color:#111;white-space:nowrap;letter-spacing:0px;width:63px;overflow:hidden;text-align:left;">Man. Korrek</div>
<svg width="12" height="10" viewBox="0 0 12 10" style="position:absolute;left:354px;top:415px"><path d="M1.4,2.6 L6.3,2.6 L6.3,0.9 L10.8,4.4 L6.3,7.9 L6.3,6.3 L1.4,6.3 Z" fill="url(#ag)" stroke="#dcbd38" stroke-width="0.8" stroke-linejoin="round"/></svg>
<div style="position:absolute;left:371px;top:414px;font-size:10px;line-height:14px;color:#111;white-space:nowrap;letter-spacing:-0.45px;width:47px;overflow:hidden;text-align:left;">2511215</div>
<div style="position:absolute;left:420px;top:414px;font-size:10px;line-height:14px;color:#111;white-space:nowrap;letter-spacing:0px;width:94px;overflow:hidden;text-align:left;">Fahrrad</div>
<div style="position:absolute;left:520px;top:414px;font-size:10px;line-height:14px;color:#1e8c1e;white-space:nowrap;letter-spacing:-0.45px;width:40px;overflow:hidden;text-align:right;">2.00</div>
<div style="position:absolute;left:561px;top:414px;font-size:10px;line-height:14px;color:#2a2a9a;white-space:nowrap;letter-spacing:-0.45px;width:32px;overflow:hidden;text-align:right;">0.00</div>
<div style="position:absolute;left:594px;top:414px;font-size:10px;line-height:14px;color:#111;white-space:nowrap;letter-spacing:0px;width:62px;overflow:hidden;text-align:center;">BW</div>
<div style="position:absolute;left:658px;top:414px;font-size:10px;line-height:14px;color:#111;white-space:nowrap;letter-spacing:0px;width:55px;overflow:hidden;text-align:left;">C-002002</div>
<div style="position:absolute;left:715px;top:414px;font-size:10px;line-height:14px;color:#111;white-space:nowrap;letter-spacing:0px;width:72px;overflow:hidden;text-align:left;"></div>
<div style="position:absolute;left:789px;top:414px;font-size:10px;line-height:14px;color:#111;white-space:nowrap;letter-spacing:0px;width:23px;overflow:hidden;text-align:left;">dba</div>
<div style="position:absolute;left:6px;top:430px;width:21px;height:16px;background:linear-gradient(#dfe3e8,#d3d8df);"></div>
<div style="position:absolute;left:6px;top:445px;width:21px;height:1px;background:#a9c7e8;"></div>
<div style="position:absolute;left:8px;top:432px;font-size:10px;line-height:14px;color:#111;white-space:nowrap;letter-spacing:-0.45px;">18</div>
<div style="position:absolute;left:28px;top:430px;width:57px;height:16px;background:#e6e6e6;"></div>
<div style="position:absolute;left:86px;top:430px;width:28px;height:16px;background:#e6e6e6;"></div>
<div style="position:absolute;left:115px;top:430px;width:107px;height:16px;background:#e6e6e6;"></div>
<div style="position:absolute;left:223px;top:430px;width:63px;height:16px;background:#e6e6e6;"></div>
<div style="position:absolute;left:287px;top:430px;width:64px;height:16px;background:#e6e6e6;"></div>
<div style="position:absolute;left:352px;top:430px;width:66px;height:16px;background:#e6e6e6;"></div>
<div style="position:absolute;left:419px;top:430px;width:95px;height:16px;background:#e6e6e6;"></div>
<div style="position:absolute;left:515px;top:430px;width:4px;height:16px;background:#e6e6e6;"></div>
<div style="position:absolute;left:520px;top:430px;width:40px;height:16px;background:#e6e6e6;"></div>
<div style="position:absolute;left:561px;top:430px;width:32px;height:16px;background:#e6e6e6;"></div>
<div style="position:absolute;left:594px;top:430px;width:62px;height:16px;background:#e6e6e6;"></div>
<div style="position:absolute;left:657px;top:430px;width:56px;height:16px;background:#e6e6e6;"></div>
<div style="position:absolute;left:714px;top:430px;width:73px;height:16px;background:#e6e6e6;"></div>
<div style="position:absolute;left:788px;top:430px;width:23px;height:16px;background:#e6e6e6;"></div>
<svg width="12" height="10" viewBox="0 0 12 10" style="position:absolute;left:30px;top:432px"><path d="M1.4,2.6 L6.3,2.6 L6.3,0.9 L10.8,4.4 L6.3,7.9 L6.3,6.3 L1.4,6.3 Z" fill="url(#ag)" stroke="#dcbd38" stroke-width="0.8" stroke-linejoin="round"/></svg>
<div style="position:absolute;left:47px;top:431px;font-size:10px;line-height:14px;color:#111;white-space:nowrap;letter-spacing:-0.45px;">1773</div>
<div style="position:absolute;left:86px;top:431px;font-size:10px;line-height:14px;color:#111;white-space:nowrap;letter-spacing:-0.45px;width:28px;overflow:hidden;text-align:center;">0</div>
<div style="position:absolute;left:116px;top:431px;font-size:10px;line-height:14px;color:#111;white-space:nowrap;letter-spacing:0px;width:106px;overflow:hidden;text-align:left;">Goods Receipt</div>
<div style="position:absolute;left:224px;top:431px;font-size:10px;line-height:14px;color:#111;white-space:nowrap;letter-spacing:-0.45px;width:62px;overflow:hidden;text-align:left;">15.03.16</div>
<div style="position:absolute;left:288px;top:431px;font-size:10px;line-height:14px;color:#111;white-space:nowrap;letter-spacing:0px;width:63px;overflow:hidden;text-align:left;">man. Adjus</div>
<svg width="12" height="10" viewBox="0 0 12 10" style="position:absolute;left:354px;top:432px"><path d="M1.4,2.6 L6.3,2.6 L6.3,0.9 L10.8,4.4 L6.3,7.9 L6.3,6.3 L1.4,6.3 Z" fill="url(#ag)" stroke="#dcbd38" stroke-width="0.8" stroke-linejoin="round"/></svg>
<div style="position:absolute;left:371px;top:431px;font-size:10px;line-height:14px;color:#111;white-space:nowrap;letter-spacing:-0.45px;width:47px;overflow:hidden;text-align:left;">2511215</div>
<div style="position:absolute;left:420px;top:431px;font-size:10px;line-height:14px;color:#111;white-space:nowrap;letter-spacing:0px;width:94px;overflow:hidden;text-align:left;">Gear Box, Semiconductor</div>
<div style="position:absolute;left:520px;top:431px;font-size:10px;line-height:14px;color:#1e8c1e;white-space:nowrap;letter-spacing:-0.45px;width:40px;overflow:hidden;text-align:right;">2.00</div>
<div style="position:absolute;left:561px;top:431px;font-size:10px;line-height:14px;color:#2a2a9a;white-space:nowrap;letter-spacing:-0.45px;width:32px;overflow:hidden;text-align:right;">0.00</div>
<div style="position:absolute;left:594px;top:431px;font-size:10px;line-height:14px;color:#111;white-space:nowrap;letter-spacing:0px;width:62px;overflow:hidden;text-align:center;">BW</div>
<div style="position:absolute;left:658px;top:431px;font-size:10px;line-height:14px;color:#111;white-space:nowrap;letter-spacing:0px;width:55px;overflow:hidden;text-align:left;">C-002002</div>
<div style="position:absolute;left:715px;top:431px;font-size:10px;line-height:14px;color:#111;white-space:nowrap;letter-spacing:0px;width:72px;overflow:hidden;text-align:left;">Franz Harald Zimmermann</div>
<div style="position:absolute;left:789px;top:431px;font-size:10px;line-height:14px;color:#111;white-space:nowrap;letter-spacing:0px;width:23px;overflow:hidden;text-align:left;">manager</div>
<div style="position:absolute;left:6px;top:447px;width:21px;height:16px;background:linear-gradient(#dfe3e8,#d3d8df);"></div>
<div style="position:absolute;left:6px;top:462px;width:21px;height:1px;background:#a9c7e8;"></div>
<div style="position:absolute;left:8px;top:449px;font-size:10px;line-height:14px;color:#111;white-space:nowrap;letter-spacing:-0.45px;">19</div>
<div style="position:absolute;left:28px;top:447px;width:57px;height:16px;background:#e6e6e6;"></div>
<div style="position:absolute;left:86px;top:447px;width:28px;height:16px;background:#e6e6e6;"></div>
<div style="position:absolute;left:115px;top:447px;width:107px;height:16px;background:#e6e6e6;"></div>
<div style="position:absolute;left:223px;top:447px;width:63px;height:16px;background:#e6e6e6;"></div>
<div style="position:absolute;left:287px;top:447px;width:64px;height:16px;background:#e6e6e6;"></div>
<div style="position:absolute;left:352px;top:447px;width:66px;height:16px;background:#e6e6e6;"></div>
<div style="position:absolute;left:419px;top:447px;width:95px;height:16px;background:#e6e6e6;"></div>
<div style="position:absolute;left:515px;top:447px;width:4px;height:16px;background:#e6e6e6;"></div>
<div style="position:absolute;left:520px;top:447px;width:40px;height:16px;background:#e6e6e6;"></div>
<div style="position:absolute;left:561px;top:447px;width:32px;height:16px;background:#e6e6e6;"></div>
<div style="position:absolute;left:594px;top:447px;width:62px;height:16px;background:#e6e6e6;"></div>
<div style="position:absolute;left:657px;top:447px;width:56px;height:16px;background:#e6e6e6;"></div>
<div style="position:absolute;left:714px;top:447px;width:73px;height:16px;background:#e6e6e6;"></div>
<div style="position:absolute;left:788px;top:447px;width:23px;height:16px;background:#e6e6e6;"></div>
<svg width="12" height="10" viewBox="0 0 12 10" style="position:absolute;left:30px;top:449px"><path d="M1.4,2.6 L6.3,2.6 L6.3,0.9 L10.8,4.4 L6.3,7.9 L6.3,6.3 L1.4,6.3 Z" fill="url(#ag)" stroke="#dcbd38" stroke-width="0.8" stroke-linejoin="round"/></svg>
<div style="position:absolute;left:47px;top:448px;font-size:10px;line-height:14px;color:#111;white-space:nowrap;letter-spacing:-0.45px;">1721</div>
<div style="position:absolute;left:86px;top:448px;font-size:10px;line-height:14px;color:#111;white-space:nowrap;letter-spacing:-0.45px;width:28px;overflow:hidden;text-align:center;">0</div>
<div style="position:absolute;left:116px;top:448px;font-size:10px;line-height:14px;color:#111;white-space:nowrap;letter-spacing:0px;width:106px;overflow:hidden;text-align:left;">Goods Receipt</div>
<div style="position:absolute;left:224px;top:448px;font-size:10px;line-height:14px;color:#111;white-space:nowrap;letter-spacing:-0.45px;width:62px;overflow:hidden;text-align:left;">12.01.16</div>
<div style="position:absolute;left:288px;top:448px;font-size:10px;line-height:14px;color:#111;white-space:nowrap;letter-spacing:-0.45px;width:63px;overflow:hidden;text-align:left;">001056060</div>
<svg width="12" height="10" viewBox="0 0 12 10" style="position:absolute;left:354px;top:449px"><path d="M1.4,2.6 L6.3,2.6 L6.3,0.9 L10.8,4.4 L6.3,7.9 L6.3,6.3 L1.4,6.3 Z" fill="url(#ag)" stroke="#dcbd38" stroke-width="0.8" stroke-linejoin="round"/></svg>
<div style="position:absolute;left:371px;top:448px;font-size:10px;line-height:14px;color:#111;white-space:nowrap;letter-spacing:-0.45px;width:47px;overflow:hidden;text-align:left;">2511215</div>
<div style="position:absolute;left:420px;top:448px;font-size:10px;line-height:14px;color:#111;white-space:nowrap;letter-spacing:0px;width:94px;overflow:hidden;text-align:left;">Gear Box, Semiconductor</div>
<div style="position:absolute;left:520px;top:448px;font-size:10px;line-height:14px;color:#1e8c1e;white-space:nowrap;letter-spacing:-0.45px;width:40px;overflow:hidden;text-align:right;">3.00</div>
<div style="position:absolute;left:561px;top:448px;font-size:10px;line-height:14px;color:#2a2a9a;white-space:nowrap;letter-spacing:-0.45px;width:32px;overflow:hidden;text-align:right;">0.00</div>
<div style="position:absolute;left:594px;top:448px;font-size:10px;line-height:14px;color:#111;white-space:nowrap;letter-spacing:-0.45px;width:62px;overflow:hidden;text-align:center;">09</div>
<div style="position:absolute;left:658px;top:448px;font-size:10px;line-height:14px;color:#111;white-space:nowrap;letter-spacing:0px;width:55px;overflow:hidden;text-align:left;"></div>
<div style="position:absolute;left:715px;top:448px;font-size:10px;line-height:14px;color:#111;white-space:nowrap;letter-spacing:0px;width:72px;overflow:hidden;text-align:left;">Franz Harald Zimmermann</div>
<div style="position:absolute;left:789px;top:448px;font-size:10px;line-height:14px;color:#111;white-space:nowrap;letter-spacing:0px;width:23px;overflow:hidden;text-align:left;">manager</div>
<div style="position:absolute;left:6px;top:464px;width:805px;height:8px;background:#e6e6e6;"></div>
<div style="position:absolute;left:6px;top:472px;width:805px;height:1px;background:#ffffff;"></div>
<div style="position:absolute;left:811px;top:120px;width:20px;height:353px;background:#f0f0f0;"></div>
<div style="position:absolute;left:812px;top:137px;width:15px;height:46px;background:#c8c8c8;"></div>
<svg width="12" height="8" style="position:absolute;left:813px;top:125px"><path d="M3,6 L6.5,2.5 L10,6" fill="none" stroke="#555" stroke-width="2"/></svg>
<svg width="12" height="8" style="position:absolute;left:813px;top:460px"><path d="M3,2 L6.5,5.5 L10,2" fill="none" stroke="#555" stroke-width="2"/></svg>
<div style="position:absolute;left:6px;top:473px;width:805px;height:16px;background:#f0f0f0;"></div>
<div style="position:absolute;left:6px;top:472px;width:10px;height:17px;background:#6e6e6e;"></div>
<div style="position:absolute;left:33px;top:473px;width:448px;height:15px;background:#c8c8c8;"></div>
<div style="position:absolute;left:811px;top:472px;width:17px;height:17px;background:#c6c6c6;"></div>
<svg width="8" height="10" style="position:absolute;left:20px;top:476px"><path d="M6.5,1 L2,5 L6.5,9" fill="none" stroke="#555" stroke-width="2"/></svg>
<svg width="8" height="10" style="position:absolute;left:799px;top:476px"><path d="M1.5,1 L6,5 L1.5,9" fill="none" stroke="#555" stroke-width="2"/></svg>
<div style="position:absolute;left:11px;top:498px;width:80px;height:19px;background:linear-gradient(#f9ebb9 0%,#f5de8e 45%,#f2d168 55%,#f0cf5e 100%);border:1px solid #5d5d68;"></div>
<div style="position:absolute;left:12px;top:499px;width:10px;height:17px;background:linear-gradient(#fbd040,#f0901c);"></div>
<div style="position:absolute;left:11px;top:500px;width:80px;text-align:center;font-size:10px;line-height:14px;color:#141414;white-space:nowrap">C<u>a</u>ncel</div>
<div style="position:absolute;left:98px;top:498px;width:82px;height:19px;background:linear-gradient(#f9ebb9 0%,#f5de8e 45%,#f2d168 55%,#f0cf5e 100%);border:1px solid #5d5d68;"></div>
<div style="position:absolute;left:98px;top:500px;width:82px;text-align:center;font-size:10px;line-height:14px;color:#141414;white-space:nowrap"><u>S</u>tart (F2)</div>
<div style="position:absolute;left:186px;top:498px;width:187px;height:19px;background:linear-gradient(#f9ebb9 0%,#f5de8e 45%,#f2d168 55%,#f0cf5e 100%);border:1px solid #5d5d68;border-left:3px solid #6a6a72;border-right:2px solid #6a6a72;"></div>
<div style="position:absolute;left:186px;top:500px;width:187px;text-align:center;font-size:10px;line-height:14px;color:#141414;white-space:nowrap">Bin Location Transactions</div>
<svg width="16" height="16" style="position:absolute;left:810px;top:505px" viewBox="0 0 16 16"><path d="M0,0 H8 V2 H2 V7.5 H0 Z" fill="#444"/><path d="M9,0 H14 L16,2 V7 H9 Z" fill="#f47b20"/><rect x="0" y="9.5" width="7" height="6.5" fill="#444"/><path d="M14,8 H16 V16 H8 V14 H14 Z" fill="#444"/></svg>
</body></html>
